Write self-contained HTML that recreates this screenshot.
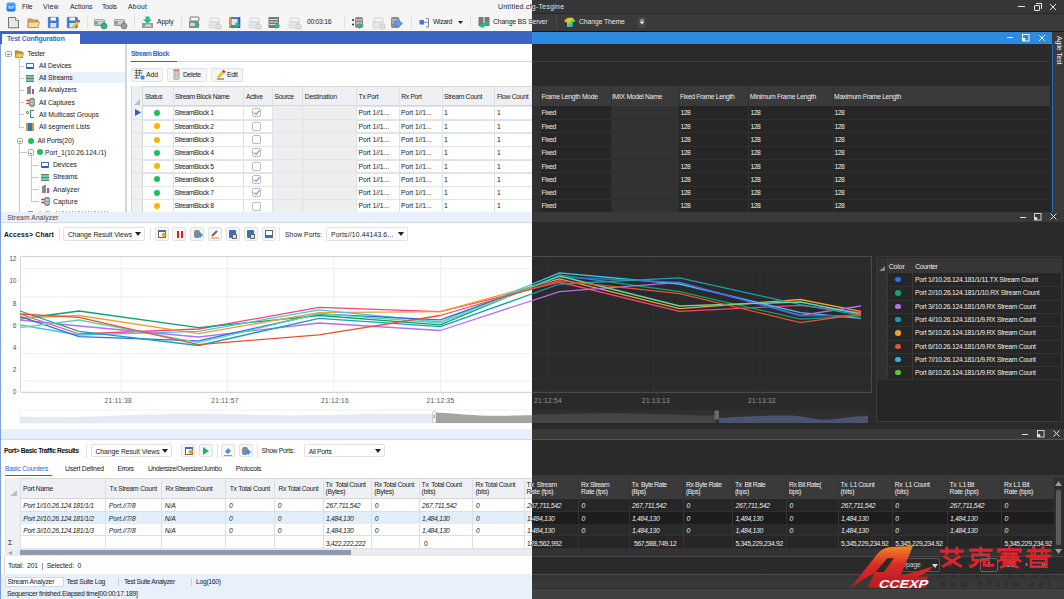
<!DOCTYPE html><html><head><meta charset="utf-8"><style>*{margin:0;padding:0;box-sizing:border-box}
html,body{width:1064px;height:599px;overflow:hidden;background:#fff}
body{position:relative;font-family:"Liberation Sans",sans-serif}
.L{position:absolute;left:0;top:0;width:1064px;height:599px;overflow:hidden}
.L div{position:absolute}
.t{white-space:pre;line-height:10px}
</style></head><body><div class="L" style="clip-path:inset(0 532px 0 0)"><div style="left:0px;top:0px;width:1064px;height:13px;background:#f4f4f4"></div><div style="left:0px;top:13px;width:1064px;height:18px;background:#f5f5f5"></div><div style="left:0px;top:30.8px;width:1064px;height:1.3px;background:#6a6660"></div><div style="left:0px;top:32px;width:1052px;height:12px;background:#3a63c6"></div><svg style="position:absolute;left:6px;top:2px" width="10" height="10"><defs><linearGradient id="lg" x1="0" y1="0" x2="0" y2="1"><stop offset="0" stop-color="#4aa8ff"/><stop offset="1" stop-color="#1a6ef0"/></linearGradient></defs><rect x="0.5" y="0.5" width="9" height="9" rx="2" fill="url(#lg)"/><text x="5" y="6.6" font-family="Liberation Sans" font-weight="bold" font-size="3.6" fill="#fff" text-anchor="middle">TeT</text></svg><div class="t" style="left:22px;top:1.90px;font-size:6.8px;letter-spacing:-0.119px;color:#222">File</div><div class="t" style="left:43px;top:1.90px;font-size:6.8px;letter-spacing:0.228px;color:#222">View</div><div class="t" style="left:70px;top:1.90px;font-size:6.8px;letter-spacing:0.034px;color:#222">Actions</div><div class="t" style="left:102px;top:1.90px;font-size:6.8px;letter-spacing:-0.218px;color:#222">Tools</div><div class="t" style="left:128px;top:1.90px;font-size:6.8px;letter-spacing:0.308px;color:#222">About</div><div class="t" style="left:498px;top:1.90px;font-size:6.8px;letter-spacing:0.331px;color:#222">Untitled.cfg-Tesgine</div><div style="left:1018px;top:6px;width:7px;height:1px;background:#222"></div><div style="left:1034px;top:5px;width:6px;height:6px;border:1px solid #222;border-radius:1px"></div><div style="left:1036px;top:3px;width:6px;height:6px;border-top:1px solid #222;border-right:1px solid #222"></div><svg style="position:absolute;left:1049px;top:3px" width="8" height="8"><path d="M1 1L7 7M7 1L1 7" stroke="#222" stroke-width="1"/></svg><div style="left:1007px;top:37px;width:6px;height:1px;background:#fff"></div><svg style="position:absolute;left:1021px;top:33px" width="9" height="9"><rect x="1.5" y="1.5" width="6.5" height="6.5" fill="none" stroke="#fff" stroke-width="0.9"/><rect x="1.2" y="5" width="3" height="3" fill="#fff"/></svg><svg style="position:absolute;left:1038px;top:34px" width="8" height="8"><path d="M1 1L7 7M7 1L1 7" stroke="#fff" stroke-width="1"/></svg><div style="left:1052px;top:32px;width:12px;height:180px;background:#f5f5f5"></div><div style="left:1051.3px;top:44px;width:1.7px;height:168px;background:#2a6fb5"></div><div class="t" style="left:1053px;top:36px;font-size:7px;letter-spacing:-0.2px;color:#222222;transform-origin:0 0;transform:translate(11px,0) rotate(90deg)">Agile Test</div><svg style="position:absolute;left:0;top:0" width="660" height="32"><path d="M8.5 17.5H15.5L18.5 20.5V27.8H8.5Z" fill="#e4e6ea" stroke="#666" stroke-width="0.9"/><path d="M15.5 17.5V20.5H18.5" fill="#fff" stroke="#666" stroke-width="0.7"/><path d="M28 19H32L33 20H38V27.5H28Z" fill="#d8a860" stroke="#a07840" stroke-width="0.7"/><path d="M28.5 22H39.5L38 27.5H28Z" fill="#f8dc98" stroke="#a07840" stroke-width="0.6"/><rect x="48.3" y="17.3" width="10" height="10.5" rx="0.8" fill="#3d7ad8" stroke="#2a5aa8" stroke-width="0.6"/><rect x="50.5" y="17.5" width="5.5" height="3" fill="#ffffff"/><rect x="50.3" y="23" width="6" height="4.5" fill="#dfe3ea"/><rect x="67.3" y="17.3" width="10" height="10.5" rx="0.8" fill="#3d7ad8" stroke="#2a5aa8" stroke-width="0.6"/><rect x="69.5" y="17.5" width="5.5" height="3" fill="#ffffff"/><rect x="69.3" y="23" width="6" height="4.5" fill="#dfe3ea"/><path d="M73 27.5L78.5 21" stroke="#f0c020" stroke-width="2.6"/><path d="M77.5 20.2L79.5 22" stroke="#e02828" stroke-width="2"/><rect x="94" y="19" width="11" height="7" rx="1.5" fill="#9a9a9a"/><rect x="95" y="21.5" width="8" height="3" fill="#d0d4dc"/><rect x="95.2" y="21.8" width="2.5" height="2" fill="#4a90e2"/><rect x="95" y="19.8" width="9" height="1" fill="#e8e8e8"/><circle cx="104" cy="26" r="3" fill="#1cc07a" stroke="#666" stroke-width="0.6"/><rect x="114" y="19" width="11" height="7" rx="1.5" fill="#9a9a9a"/><rect x="115" y="21.5" width="8" height="3" fill="#d0d4dc"/><rect x="115.2" y="21.8" width="2.5" height="2" fill="#4a90e2"/><rect x="115" y="19.8" width="9" height="1" fill="#e8e8e8"/><circle cx="124" cy="26" r="3" fill="#9a9a9a" stroke="#666" stroke-width="0.6"/><path d="M142 23H153V28H142Z" fill="#9a9a9a"/><rect x="143" y="24.5" width="8" height="2" fill="#d8dce4"/><rect x="143" y="24.5" width="2.5" height="1.5" fill="#4a90e2"/><path d="M145.5 16.5H149.5V19.5H152L147.5 23.5L143 19.5H145.5Z" fill="#1cc07a"/><rect x="190" y="17" width="9" height="4" rx="1" fill="none" stroke="#777" stroke-width="1"/><rect x="189" y="21" width="10" height="7" rx="1" fill="#8a8a8a"/><rect x="190" y="23" width="5" height="3" fill="#cfd6e0"/><path d="M195 22L200 25L195 28Z" fill="#1cc07a"/><rect x="210" y="18" width="9" height="4" rx="1" fill="none" stroke="#d0d0d0" stroke-width="1"/><rect x="209" y="22" width="10" height="6" rx="1" fill="#e6e6e6" stroke="#d0d0d0" stroke-width="0.8"/><rect x="216" y="24" width="5" height="5" rx="1" fill="#e0e0e0" stroke="#c8c8c8" stroke-width="0.8"/><rect x="229" y="17" width="11" height="11" fill="#4a7ad0"/><rect x="229" y="17" width="2" height="11" fill="#c8a028"/><rect x="238.5" y="17" width="1.8" height="11" fill="#3060b0"/><rect x="231.5" y="19" width="6" height="6" fill="#dfe8f8"/><path d="M235.5 22L240.5 25L235.5 28Z" fill="#1cc07a"/><rect x="250" y="18" width="9" height="4" rx="1" fill="none" stroke="#d0d0d0" stroke-width="1"/><rect x="249" y="22" width="10" height="6" rx="1" fill="#e6e6e6" stroke="#d0d0d0" stroke-width="0.8"/><rect x="256" y="24" width="5" height="5" rx="1" fill="#e0e0e0" stroke="#c8c8c8" stroke-width="0.8"/><rect x="268.5" y="17" width="10.5" height="11" fill="#7a7a7a"/><path d="M269.5 19.5H278M269.5 22H278M269.5 24.5H278" stroke="#e8e8e8" stroke-width="0.9"/><path d="M275.5 23L280.5 26L275.5 29Z" fill="#1cc07a"/><rect x="290" y="18" width="9" height="4" rx="1" fill="none" stroke="#d0d0d0" stroke-width="1"/><rect x="289" y="22" width="10" height="6" rx="1" fill="#e6e6e6" stroke="#d0d0d0" stroke-width="0.8"/><rect x="296" y="24" width="5" height="5" rx="1" fill="#e0e0e0" stroke="#c8c8c8" stroke-width="0.8"/><circle cx="353" cy="20" r="1" fill="#222"/><circle cx="353" cy="24.5" r="1" fill="#222"/><rect x="355" y="17" width="8" height="11" rx="2" fill="#8a8a8a"/><path d="M356 20H362M356 23H362" stroke="#eee" stroke-width="0.9"/><path d="M359 23L364 26L359 29Z" fill="#1cc07a"/><rect x="374" y="18" width="9" height="4" rx="1" fill="none" stroke="#d0d0d0" stroke-width="1"/><rect x="373" y="22" width="10" height="6" rx="1" fill="#e6e6e6" stroke="#d0d0d0" stroke-width="0.8"/><rect x="380" y="24" width="5" height="5" rx="1" fill="#e0e0e0" stroke="#c8c8c8" stroke-width="0.8"/><rect x="391" y="17" width="8.5" height="11" rx="2" fill="#8a8a8a"/><path d="M392 20H398.5M392 23H398.5" stroke="#eee" stroke-width="0.9"/><path d="M398 19.5L402.5 23.5L398 27.5L393.5 23.5Z" fill="#5a9af0" stroke="#3a70c8" stroke-width="0.6"/><rect x="419.5" y="20" width="4.5" height="4.5" rx="0.6" fill="#3a7ae8"/><path d="M424 22.3H426M426 18.5H428.5V27H426M426 22.3H428.5" fill="none" stroke="#888" stroke-width="1"/><path d="M458 21H463L460.5 24Z" fill="#222"/><rect x="478.5" y="17" width="5" height="9" fill="#7a7a7a"/><rect x="484.5" y="17" width="5" height="9" fill="#7a7a7a"/><path d="M479 26L486 21.5L489.5 23L482.5 28Z" fill="#1cc07a"/><defs><linearGradient id="tg" x1="0" y1="0" x2="1" y2="1"><stop offset="0" stop-color="#ff4040"/><stop offset="0.35" stop-color="#ffd020"/><stop offset="0.6" stop-color="#30e060"/><stop offset="0.8" stop-color="#20a0ff"/><stop offset="1" stop-color="#c040ff"/></linearGradient></defs><path d="M567 18L569 17.5Q569.8 19 570.5 17.5L572.5 18L575.5 20.5L574 22.5L572.8 21.8V27H567V21.8L565.5 22.5L564 20.5Z" fill="url(#tg)"/></svg><div style="left:86.5px;top:15px;width:1px;height:14px;background:#e2e2e2"></div><div style="left:133.5px;top:15px;width:1px;height:14px;background:#e2e2e2"></div><div style="left:181.3px;top:15px;width:1px;height:14px;background:#e2e2e2"></div><div style="left:343.8px;top:15px;width:1px;height:14px;background:#e2e2e2"></div><div style="left:410.6px;top:15px;width:1px;height:14px;background:#e2e2e2"></div><div style="left:470.4px;top:15px;width:1px;height:14px;background:#e2e2e2"></div><div style="left:556.3px;top:15px;width:1px;height:14px;background:#e2e2e2"></div><div class="t" style="left:157px;top:17.40px;font-size:6.8px;letter-spacing:-0.102px;color:#222">Apply</div><div class="t" style="left:307px;top:17.40px;font-size:6.8px;letter-spacing:-0.281px;color:#222">00:03:16</div><div class="t" style="left:433px;top:17.40px;font-size:6.8px;letter-spacing:-0.371px;color:#222">Wizard</div><div class="t" style="left:493px;top:17.40px;font-size:6.8px;letter-spacing:-0.146px;color:#222">Change BS Server</div><div class="t" style="left:579px;top:17.40px;font-size:6.8px;letter-spacing:-0.077px;color:#222">Change Theme</div><div style="left:2px;top:34px;width:78px;height:10px;background:#ffffff"></div><div class="t" style="left:7px;top:33.90px;font-size:6.8px;letter-spacing:-0.125px;color:#3a63c6;font-weight:bold">Test Configuration</div><div style="left:0px;top:44px;width:1052px;height:168px;background:#ffffff"></div><div style="left:5px;top:50.5px;width:6.5px;height:6.5px;border:1px solid #a8a8a8;border-radius:1.5px;background:#f8f8f8"></div><div style="left:7px;top:53.7px;width:2.5px;height:0.8px;background:#777"></div><svg style="position:absolute;left:15px;top:50px" width="9" height="8"><path d="M0.5 0.8H3.5L4.3 1.8H7.5V7.3H0.5Z" fill="#c8963c" stroke="#8a6428" stroke-width="0.6"/><path d="M0.8 3.3H8.6L7.4 7.3H0.5Z" fill="#f4cc50" stroke="#8a6428" stroke-width="0.5"/></svg><div class="t" style="left:27.5px;top:48.90px;font-size:6.8px;letter-spacing:-0.203px;color:#222222">Tester</div><div style="left:18.5px;top:57px;width:1px;height:70px;background:#c8c8c8"></div><div style="left:37px;top:72.4px;width:88px;height:11px;background:#e8f1fc"></div><div style="left:19px;top:65.7px;width:5px;height:1px;background:#c8c8c8"></div><div class="t" style="left:39px;top:61.10px;font-size:6.8px;letter-spacing:-0.113px;color:#222222">All Devices</div><div style="left:19px;top:77.8px;width:5px;height:1px;background:#c8c8c8"></div><div class="t" style="left:39px;top:73.20px;font-size:6.8px;letter-spacing:-0.102px;color:#222222">All Streams</div><div style="left:19px;top:90px;width:5px;height:1px;background:#c8c8c8"></div><div class="t" style="left:39px;top:85.40px;font-size:6.8px;letter-spacing:-0.095px;color:#222222">All Analyzers</div><div style="left:19px;top:102.3px;width:5px;height:1px;background:#c8c8c8"></div><div class="t" style="left:39px;top:97.70px;font-size:6.8px;letter-spacing:-0.099px;color:#222222">All Captures</div><div style="left:19px;top:114.3px;width:5px;height:1px;background:#c8c8c8"></div><div class="t" style="left:39px;top:109.70px;font-size:6.8px;letter-spacing:-0.029px;color:#222222">All Multicast Groups</div><div style="left:19px;top:126.8px;width:5px;height:1px;background:#c8c8c8"></div><div class="t" style="left:39px;top:122.20px;font-size:6.8px;letter-spacing:-0.025px;color:#222222">All segment Lists</div><div style="left:26px;top:62.5px;width:8px;height:6px;background:#fff;border:1px solid #4d6fa8;border-bottom:2.5px solid #2d5fbf;border-radius:1px"></div><div style="left:26px;top:74.5px;width:8px;height:7px;background:repeating-linear-gradient(#777 0 1.5px,#6cd0a0 1.5px 3px)"></div><div style="left:26.5px;top:86.5px;width:2px;height:7px;background:#888"></div><div style="left:29px;top:85.5px;width:2px;height:8px;background:#888"></div><div style="left:31.5px;top:88.5px;width:2.5px;height:5px;background:#a050d0"></div><svg style="position:absolute;left:25.5px;top:98px" width="9" height="9"><path d="M0.3 2.5H3.5M0.3 5.5H3.5" stroke="#e02828" stroke-width="1.3"/><rect x="3.8" y="0.5" width="4.5" height="7.8" rx="1" fill="#a8a8a8" stroke="#555" stroke-width="0.7"/><path d="M4 3H8M4 5.8H8" stroke="#eee" stroke-width="0.6"/></svg><div style="left:26px;top:111px;width:3px;height:3px;border:1px solid #555;border-radius:50%"></div><div style="left:30px;top:110px;width:4px;height:8px;border:1.5px solid #2a9a6a;border-right:none"></div><div style="left:26px;top:123px;width:8px;height:8px;background:#3a70c0;border-left:2px solid #c8a030;border-right:2px solid #c8a030"></div><div style="left:16.5px;top:137.5px;width:6.5px;height:6.5px;border:1px solid #a8a8a8;border-radius:1.5px;background:#f8f8f8"></div><div style="left:18.5px;top:140.7px;width:2.5px;height:0.8px;background:#777"></div><div style="left:28px;top:137.5px;width:6px;height:6px;background:#1fbf5f;border-radius:50%"></div><div class="t" style="left:37.5px;top:135.90px;font-size:6.8px;letter-spacing:-0.076px;color:#222222">All Ports(20)</div><div style="left:19px;top:144px;width:1px;height:68px;background:#c8c8c8"></div><div style="left:19px;top:152.4px;width:8px;height:1px;background:#c8c8c8"></div><div style="left:27.5px;top:149.4px;width:6.5px;height:6.5px;border:1px solid #a8a8a8;border-radius:1.5px;background:#f8f8f8"></div><div style="left:29.5px;top:152.6px;width:2.5px;height:0.8px;background:#777"></div><div style="left:37px;top:149.4px;width:6px;height:6px;background:#1fbf5f;border-radius:50%"></div><div class="t" style="left:45px;top:147.80px;font-size:6.8px;letter-spacing:-0.051px;color:#222222">Port_1(10.26.124./1)</div><div style="left:30.5px;top:156px;width:1px;height:46px;background:#c8c8c8"></div><div style="left:30.5px;top:164.7px;width:8px;height:1px;background:#c8c8c8"></div><div class="t" style="left:53px;top:160.10px;font-size:6.8px;letter-spacing:-0.064px;color:#222222">Devices</div><div style="left:30.5px;top:176.9px;width:8px;height:1px;background:#c8c8c8"></div><div class="t" style="left:53px;top:172.30px;font-size:6.8px;letter-spacing:-0.119px;color:#222222">Streams</div><div style="left:30.5px;top:189.4px;width:8px;height:1px;background:#c8c8c8"></div><div class="t" style="left:53px;top:184.80px;font-size:6.8px;letter-spacing:0.006px;color:#222222">Analyzer</div><div style="left:30.5px;top:201.3px;width:8px;height:1px;background:#c8c8c8"></div><div class="t" style="left:53px;top:196.70px;font-size:6.8px;letter-spacing:0.085px;color:#222222">Capture</div><div style="left:41px;top:161.5px;width:8px;height:6px;background:#fff;border:1px solid #4d6fa8;border-bottom:2.5px solid #2d5fbf;border-radius:1px"></div><div style="left:41px;top:173.5px;width:8px;height:7px;background:repeating-linear-gradient(#777 0 1.5px,#6cd0a0 1.5px 3px)"></div><div style="left:41.5px;top:186px;width:2px;height:7px;background:#888"></div><div style="left:44px;top:185px;width:2px;height:8px;background:#888"></div><div style="left:46.5px;top:188px;width:2.5px;height:5px;background:#a050d0"></div><svg style="position:absolute;left:40.5px;top:197px" width="9" height="9"><path d="M0.3 2.5H3.5M0.3 5.5H3.5" stroke="#e02828" stroke-width="1.3"/><rect x="3.8" y="0.5" width="4.5" height="7.8" rx="1" fill="#a8a8a8" stroke="#555" stroke-width="0.7"/><path d="M4 3H8M4 5.8H8" stroke="#eee" stroke-width="0.6"/></svg><div style="left:28px;top:210.8px;width:5px;height:1.2px;background:#999"></div><div style="left:38.5px;top:210.8px;width:2.5px;height:1.2px;background:#f5c840"></div><div style="left:46px;top:210.8px;width:3px;height:1.2px;background:#aaa"></div><div style="left:56px;top:210.8px;width:52px;height:1.2px;background:repeating-linear-gradient(90deg,#b0b0b0 0 1.2px,transparent 1.2px 3.2px)"></div><div style="left:125px;top:44px;width:1.5px;height:168px;background:#d6d6d6"></div><div class="t" style="left:131px;top:49.10px;font-size:6.8px;letter-spacing:-0.460px;color:#3a63c6;font-weight:bold">Stream Block</div><div style="left:130px;top:61px;width:920px;height:1.2px;background:#d6d6d6"></div><div style="left:131px;top:60.5px;width:46px;height:1.6px;background:#3a63c6"></div><div style="left:131px;top:67.5px;width:32px;height:14px;background:#f6f6f6;border:1px solid #e2e2e2;border-radius:2px"></div><div class="t" style="left:146px;top:70.00px;font-size:6.8px;letter-spacing:-0.049px;color:#222222">Add</div><div style="left:167.3px;top:67.5px;width:40.2px;height:14px;background:#f6f6f6;border:1px solid #e2e2e2;border-radius:2px"></div><div class="t" style="left:183px;top:70.00px;font-size:6.8px;letter-spacing:-0.331px;color:#222222">Delete</div><div style="left:211.3px;top:67.5px;width:32.2px;height:14px;background:#f6f6f6;border:1px solid #e2e2e2;border-radius:2px"></div><div class="t" style="left:227px;top:70.00px;font-size:6.8px;letter-spacing:-0.239px;color:#222222">Edit</div><svg style="position:absolute;left:134px;top:69px" width="11" height="11"><path d="M0.5 1.5H8.5M0.5 4H8.5M0.5 6.5H6M0.5 9H5" stroke="#666" stroke-width="1.2"/><path d="M2.5 0.5V9.5M5.5 0.5V7" stroke="#666" stroke-width="0.8"/><rect x="6.5" y="6.5" width="4" height="4" rx="0.8" fill="#3a8ef0"/></svg><svg style="position:absolute;left:173px;top:69px" width="8" height="11"><rect x="0.5" y="0.3" width="6" height="1.8" fill="#f07858"/><rect x="1" y="2" width="5" height="8.3" rx="1" fill="#e8e8e8" stroke="#8a8a8a" stroke-width="0.8"/><path d="M2.8 3.5V8.8M4.3 3.5V8.8" stroke="#8a8a8a" stroke-width="0.6"/></svg><svg style="position:absolute;left:216px;top:69px" width="10" height="11"><path d="M2 8.5L7.5 2.5" stroke="#f0c020" stroke-width="2.6"/><path d="M6.8 1.5L8.8 3.5" stroke="#e02828" stroke-width="2"/><path d="M1 10H8" stroke="#444" stroke-width="0.9"/></svg><div style="left:130.5px;top:85.6px;width:429.5px;height:20.700000000000003px;background:#eef0f3;border-top:1px solid #d6d6d6"></div><div style="left:130.5px;top:106.3px;width:429.5px;height:105.7px;background:#ffffff"></div><div style="left:130.5px;top:106.3px;width:429.5px;height:1px;background:#dfe2e6"></div><div style="left:130.5px;top:119.6px;width:429.5px;height:1px;background:#dfe2e6"></div><div style="left:130.5px;top:132.9px;width:429.5px;height:1px;background:#dfe2e6"></div><div style="left:130.5px;top:146.2px;width:429.5px;height:1px;background:#dfe2e6"></div><div style="left:130.5px;top:159.5px;width:429.5px;height:1px;background:#dfe2e6"></div><div style="left:130.5px;top:172.8px;width:429.5px;height:1px;background:#dfe2e6"></div><div style="left:130.5px;top:186.10000000000002px;width:429.5px;height:1px;background:#dfe2e6"></div><div style="left:130.5px;top:199.4px;width:429.5px;height:1px;background:#dfe2e6"></div><div style="left:130.5px;top:105.3px;width:429.5px;height:1px;background:#d6d6d6"></div><div style="left:130.5px;top:85.6px;width:1px;height:126.4px;background:#dfe2e6"></div><div style="left:142.4px;top:85.6px;width:1px;height:126.4px;background:#dfe2e6"></div><div style="left:172.6px;top:85.6px;width:1px;height:126.4px;background:#dfe2e6"></div><div style="left:243.4px;top:85.6px;width:1px;height:126.4px;background:#dfe2e6"></div><div style="left:272px;top:85.6px;width:1px;height:126.4px;background:#dfe2e6"></div><div style="left:302.3px;top:85.6px;width:1px;height:126.4px;background:#dfe2e6"></div><div style="left:356.1px;top:85.6px;width:1px;height:126.4px;background:#dfe2e6"></div><div style="left:398.7px;top:85.6px;width:1px;height:126.4px;background:#dfe2e6"></div><div style="left:441.5px;top:85.6px;width:1px;height:126.4px;background:#dfe2e6"></div><div style="left:494.4px;top:85.6px;width:1px;height:126.4px;background:#dfe2e6"></div><div style="left:130.5px;top:85.6px;width:12px;height:126.4px;background:#eef0f3"></div><div style="left:142.4px;top:85.6px;width:1px;height:126.4px;background:#d6d6d6"></div><div style="left:130.5px;top:85.6px;width:1px;height:126.4px;background:#d6d6d6"></div><svg style="position:absolute;left:133px;top:99px" width="8" height="6"><path d="M7 0V6H1Z" fill="#b6bdc8"/></svg><svg style="position:absolute;left:135px;top:109px" width="6" height="7"><path d="M0 0L6 3.5L0 7Z" fill="#2a5bd0"/></svg><div style="left:272.5px;top:106.3px;width:83.5px;height:105.7px;background:#eeeeee"></div><div style="left:302.3px;top:106.3px;width:1px;height:105.7px;background:#e0e0e0"></div><div style="left:154px;top:109.89999999999999px;width:6px;height:6px;background:#1fbf5f;border-radius:50%"></div><div class="t" style="left:174.5px;top:108.30px;font-size:6.8px;letter-spacing:-0.393px;color:#222222">StreamBlock 1</div><div style="left:251.5px;top:108.39999999999999px;width:9px;height:9px;border:1px solid #bcbcbc;border-radius:2px;background:#fff"></div><svg style="position:absolute;left:252.5px;top:109.39999999999999px" width="7" height="7"><path d="M1 3.5L3 5.5L6.5 1.5" stroke="#2a5bd0" stroke-width="1" fill="none"/></svg><div class="t" style="left:358.5px;top:108.30px;font-size:6.8px;letter-spacing:-0.070px;color:#222222">Port 1//1...</div><div class="t" style="left:401px;top:108.30px;font-size:6.8px;letter-spacing:-0.070px;color:#222222">Port 1//1...</div><div class="t" style="left:444px;top:108.30px;font-size:6.8px;letter-spacing:-0.334px;color:#222222">1</div><div class="t" style="left:497px;top:108.30px;font-size:6.8px;letter-spacing:-0.334px;color:#222222">1</div><div style="left:154px;top:123.19999999999999px;width:6px;height:6px;background:#f5b800;border-radius:50%"></div><div class="t" style="left:174.5px;top:121.60px;font-size:6.8px;letter-spacing:-0.393px;color:#222222">StreamBlock 2</div><div style="left:251.5px;top:121.69999999999999px;width:9px;height:9px;border:1px solid #bcbcbc;border-radius:2px;background:#fff"></div><div class="t" style="left:358.5px;top:121.60px;font-size:6.8px;letter-spacing:-0.070px;color:#222222">Port 1//1...</div><div class="t" style="left:401px;top:121.60px;font-size:6.8px;letter-spacing:-0.070px;color:#222222">Port 1//1...</div><div class="t" style="left:444px;top:121.60px;font-size:6.8px;letter-spacing:-0.334px;color:#222222">1</div><div class="t" style="left:497px;top:121.60px;font-size:6.8px;letter-spacing:-0.334px;color:#222222">1</div><div style="left:154px;top:136.5px;width:6px;height:6px;background:#f5b800;border-radius:50%"></div><div class="t" style="left:174.5px;top:134.90px;font-size:6.8px;letter-spacing:-0.393px;color:#222222">StreamBlock 3</div><div style="left:251.5px;top:135.0px;width:9px;height:9px;border:1px solid #bcbcbc;border-radius:2px;background:#fff"></div><div class="t" style="left:358.5px;top:134.90px;font-size:6.8px;letter-spacing:-0.070px;color:#222222">Port 1//1...</div><div class="t" style="left:401px;top:134.90px;font-size:6.8px;letter-spacing:-0.070px;color:#222222">Port 1//1...</div><div class="t" style="left:444px;top:134.90px;font-size:6.8px;letter-spacing:-0.334px;color:#222222">1</div><div class="t" style="left:497px;top:134.90px;font-size:6.8px;letter-spacing:-0.334px;color:#222222">1</div><div style="left:154px;top:149.79999999999998px;width:6px;height:6px;background:#1fbf5f;border-radius:50%"></div><div class="t" style="left:174.5px;top:148.20px;font-size:6.8px;letter-spacing:-0.393px;color:#222222">StreamBlock 4</div><div style="left:251.5px;top:148.29999999999998px;width:9px;height:9px;border:1px solid #bcbcbc;border-radius:2px;background:#fff"></div><svg style="position:absolute;left:252.5px;top:149.29999999999998px" width="7" height="7"><path d="M1 3.5L3 5.5L6.5 1.5" stroke="#2a5bd0" stroke-width="1" fill="none"/></svg><div class="t" style="left:358.5px;top:148.20px;font-size:6.8px;letter-spacing:-0.070px;color:#222222">Port 1//1...</div><div class="t" style="left:401px;top:148.20px;font-size:6.8px;letter-spacing:-0.070px;color:#222222">Port 1//1...</div><div class="t" style="left:444px;top:148.20px;font-size:6.8px;letter-spacing:-0.334px;color:#222222">1</div><div class="t" style="left:497px;top:148.20px;font-size:6.8px;letter-spacing:-0.334px;color:#222222">1</div><div style="left:154px;top:163.1px;width:6px;height:6px;background:#f5b800;border-radius:50%"></div><div class="t" style="left:174.5px;top:161.50px;font-size:6.8px;letter-spacing:-0.393px;color:#222222">StreamBlock 5</div><div style="left:251.5px;top:161.6px;width:9px;height:9px;border:1px solid #bcbcbc;border-radius:2px;background:#fff"></div><div class="t" style="left:358.5px;top:161.50px;font-size:6.8px;letter-spacing:-0.070px;color:#222222">Port 1//1...</div><div class="t" style="left:401px;top:161.50px;font-size:6.8px;letter-spacing:-0.070px;color:#222222">Port 1//1...</div><div class="t" style="left:444px;top:161.50px;font-size:6.8px;letter-spacing:-0.334px;color:#222222">1</div><div class="t" style="left:497px;top:161.50px;font-size:6.8px;letter-spacing:-0.334px;color:#222222">1</div><div style="left:154px;top:176.4px;width:6px;height:6px;background:#1fbf5f;border-radius:50%"></div><div class="t" style="left:174.5px;top:174.80px;font-size:6.8px;letter-spacing:-0.393px;color:#222222">StreamBlock 6</div><div style="left:251.5px;top:174.9px;width:9px;height:9px;border:1px solid #bcbcbc;border-radius:2px;background:#fff"></div><svg style="position:absolute;left:252.5px;top:175.9px" width="7" height="7"><path d="M1 3.5L3 5.5L6.5 1.5" stroke="#2a5bd0" stroke-width="1" fill="none"/></svg><div class="t" style="left:358.5px;top:174.80px;font-size:6.8px;letter-spacing:-0.070px;color:#222222">Port 1//1...</div><div class="t" style="left:401px;top:174.80px;font-size:6.8px;letter-spacing:-0.070px;color:#222222">Port 1//1...</div><div class="t" style="left:444px;top:174.80px;font-size:6.8px;letter-spacing:-0.334px;color:#222222">1</div><div class="t" style="left:497px;top:174.80px;font-size:6.8px;letter-spacing:-0.334px;color:#222222">1</div><div style="left:154px;top:189.70000000000002px;width:6px;height:6px;background:#1fbf5f;border-radius:50%"></div><div class="t" style="left:174.5px;top:188.10px;font-size:6.8px;letter-spacing:-0.393px;color:#222222">StreamBlock 7</div><div style="left:251.5px;top:188.20000000000002px;width:9px;height:9px;border:1px solid #bcbcbc;border-radius:2px;background:#fff"></div><svg style="position:absolute;left:252.5px;top:189.20000000000002px" width="7" height="7"><path d="M1 3.5L3 5.5L6.5 1.5" stroke="#2a5bd0" stroke-width="1" fill="none"/></svg><div class="t" style="left:358.5px;top:188.10px;font-size:6.8px;letter-spacing:-0.070px;color:#222222">Port 1//1...</div><div class="t" style="left:401px;top:188.10px;font-size:6.8px;letter-spacing:-0.070px;color:#222222">Port 1//1...</div><div class="t" style="left:444px;top:188.10px;font-size:6.8px;letter-spacing:-0.334px;color:#222222">1</div><div class="t" style="left:497px;top:188.10px;font-size:6.8px;letter-spacing:-0.334px;color:#222222">1</div><div style="left:154px;top:203.0px;width:6px;height:6px;background:#f5b800;border-radius:50%"></div><div class="t" style="left:174.5px;top:201.40px;font-size:6.8px;letter-spacing:-0.393px;color:#222222">StreamBlock 8</div><div style="left:251.5px;top:201.5px;width:9px;height:9px;border:1px solid #bcbcbc;border-radius:2px;background:#fff"></div><div class="t" style="left:358.5px;top:201.40px;font-size:6.8px;letter-spacing:-0.070px;color:#222222">Port 1//1...</div><div class="t" style="left:401px;top:201.40px;font-size:6.8px;letter-spacing:-0.070px;color:#222222">Port 1//1...</div><div class="t" style="left:444px;top:201.40px;font-size:6.8px;letter-spacing:-0.334px;color:#222222">1</div><div class="t" style="left:497px;top:201.40px;font-size:6.8px;letter-spacing:-0.334px;color:#222222">1</div><div class="t" style="left:144.9px;top:91.70px;font-size:6.8px;letter-spacing:-0.315px;color:#222222">Status</div><div class="t" style="left:175.1px;top:91.70px;font-size:6.8px;letter-spacing:-0.360px;color:#222222">Stream Block Name</div><div class="t" style="left:245.9px;top:91.70px;font-size:6.8px;letter-spacing:-0.283px;color:#222222">Active</div><div class="t" style="left:274.5px;top:91.70px;font-size:6.8px;letter-spacing:-0.389px;color:#222222">Source</div><div class="t" style="left:304.8px;top:91.70px;font-size:6.8px;letter-spacing:-0.182px;color:#222222">Destination</div><div class="t" style="left:358.6px;top:91.70px;font-size:6.8px;letter-spacing:-0.322px;color:#222222">Tx Port</div><div class="t" style="left:401.2px;top:91.70px;font-size:6.8px;letter-spacing:-0.328px;color:#222222">Rx Port</div><div class="t" style="left:444.0px;top:91.70px;font-size:6.8px;letter-spacing:-0.314px;color:#222222">Stream Count</div><div class="t" style="left:496.9px;top:91.70px;font-size:6.8px;letter-spacing:-0.299px;color:#222222">Flow Count</div><div style="left:130.5px;top:119.1px;width:429.5px;height:0.8px;background:#e2e4e8"></div><div style="left:130.5px;top:132.4px;width:429.5px;height:0.8px;background:#e2e4e8"></div><div style="left:130.5px;top:145.7px;width:429.5px;height:0.8px;background:#e2e4e8"></div><div style="left:130.5px;top:159.0px;width:429.5px;height:0.8px;background:#e2e4e8"></div><div style="left:130.5px;top:172.3px;width:429.5px;height:0.8px;background:#e2e4e8"></div><div style="left:130.5px;top:185.60000000000002px;width:429.5px;height:0.8px;background:#e2e4e8"></div><div style="left:130.5px;top:198.9px;width:429.5px;height:0.8px;background:#e2e4e8"></div><div style="left:0px;top:212px;width:1064px;height:10px;background:#e8f1fb"></div><div style="left:0px;top:221.5px;width:1064px;height:1px;background:#d4dbe6"></div><div class="t" style="left:7.2px;top:213.20px;font-size:6.8px;letter-spacing:0.094px;color:#444">Stream Analyzer</div><div style="left:0px;top:222.5px;width:1064px;height:203px;background:#ffffff"></div><div class="t" style="left:4px;top:229.90px;font-size:6.8px;letter-spacing:0.205px;color:#111;font-weight:bold">Access&gt; Chart</div><div style="left:59px;top:227px;width:1px;height:14px;background:#e2e2e2"></div><div style="left:63px;top:227px;width:82px;height:13.5px;background:#ffffff;border:1px solid #e2e2e2;border-radius:2px"></div><div class="t" style="left:68px;top:229.55px;font-size:6.8px;letter-spacing:-0.044px;color:#222222">Change Result Views</div><svg style="position:absolute;left:135px;top:231.75px" width="6" height="4"><path d="M0 0H6L3 4Z" fill="#222222"/></svg><div style="left:150px;top:227px;width:1px;height:14px;background:#e2e2e2"></div><div style="left:154.5px;top:227px;width:14px;height:13.5px;background:#f6f6f6;border:1px solid #e2e2e2;border-radius:2px"></div><div style="left:172.2px;top:227px;width:14px;height:13.5px;background:#f6f6f6;border:1px solid #e2e2e2;border-radius:2px"></div><div style="left:190px;top:227px;width:14px;height:13.5px;background:#f6f6f6;border:1px solid #e2e2e2;border-radius:2px"></div><div style="left:208px;top:227px;width:14px;height:13.5px;background:#f6f6f6;border:1px solid #e2e2e2;border-radius:2px"></div><div style="left:226px;top:227px;width:14px;height:13.5px;background:#f6f6f6;border:1px solid #e2e2e2;border-radius:2px"></div><div style="left:243.5px;top:227px;width:14px;height:13.5px;background:#f6f6f6;border:1px solid #e2e2e2;border-radius:2px"></div><div style="left:261.5px;top:227px;width:14px;height:13.5px;background:#f6f6f6;border:1px solid #e2e2e2;border-radius:2px"></div><div style="left:158px;top:230px;width:8px;height:7.5px;border:1px solid #666;border-top:2px solid #3a70c0;background:#fff"></div><div style="left:162px;top:233px;width:4px;height:4px;background:#e8a020;transform:rotate(45deg)"></div><div style="left:176.5px;top:230.5px;width:2px;height:7px;background:#d62020"></div><div style="left:180.5px;top:230.5px;width:2px;height:7px;background:#d62020"></div><div style="left:193.5px;top:230px;width:6px;height:8px;background:#8a8a8a;border-radius:2px"></div><svg style="position:absolute;left:197px;top:232px" width="6" height="6"><path d="M0 1H3V0L6 3L3 6V5H0Z" fill="#4a90e2"/></svg><svg style="position:absolute;left:210px;top:229px" width="10" height="10"><path d="M2 7L7 2" stroke="#666" stroke-width="2"/><path d="M1 9H9" stroke="#f08030" stroke-width="1"/></svg><div style="left:229px;top:230px;width:7px;height:8px;background:#3a70c0;border-radius:1px"></div><div style="left:232px;top:234px;width:5px;height:5px;background:#ddd;border:1px solid #666"></div><div style="left:246.5px;top:230px;width:7px;height:8px;background:#3a70c0;border-radius:1px"></div><div style="left:249.5px;top:234px;width:5px;height:5px;background:#ddd;border:1px solid #666"></div><div style="left:264.5px;top:230px;width:8px;height:8px;border:1px solid #666;background:#fff"></div><div style="left:266px;top:235px;width:6px;height:2px;background:#3a70c0"></div><div style="left:279px;top:227px;width:1px;height:14px;background:#e2e2e2"></div><div class="t" style="left:285px;top:229.80px;font-size:6.8px;letter-spacing:0.034px;color:#222222">Show Ports:</div><div style="left:326px;top:227px;width:82px;height:13.5px;background:#ffffff;border:1px solid #e2e2e2;border-radius:2px"></div><div class="t" style="left:331px;top:229.55px;font-size:6.8px;letter-spacing:0.155px;color:#222222">Ports//10.44143.6...</div><svg style="position:absolute;left:398px;top:231.75px" width="6" height="4"><path d="M0 0H6L3 4Z" fill="#222222"/></svg><svg style="position:absolute;left:0;top:0" width="1064" height="599"><line x1="21" y1="268.5" x2="1050" y2="268.5" stroke="#efefef" stroke-width="1"/><line x1="21" y1="296.8" x2="1050" y2="296.8" stroke="#efefef" stroke-width="1"/><line x1="21" y1="325" x2="1050" y2="325" stroke="#efefef" stroke-width="1"/><line x1="21" y1="353.5" x2="1050" y2="353.5" stroke="#efefef" stroke-width="1"/><line x1="21" y1="381" x2="1050" y2="381" stroke="#efefef" stroke-width="1"/><line x1="121" y1="257" x2="121" y2="392" stroke="#efefef" stroke-width="1"/><line x1="124" y1="392" x2="124" y2="394" stroke="#d4d4d4" stroke-width="1"/><line x1="227.5" y1="257" x2="227.5" y2="392" stroke="#efefef" stroke-width="1"/><line x1="230.5" y1="392" x2="230.5" y2="394" stroke="#d4d4d4" stroke-width="1"/><line x1="334" y1="257" x2="334" y2="392" stroke="#efefef" stroke-width="1"/><line x1="337" y1="392" x2="337" y2="394" stroke="#d4d4d4" stroke-width="1"/><line x1="440.5" y1="257" x2="440.5" y2="392" stroke="#efefef" stroke-width="1"/><line x1="443.5" y1="392" x2="443.5" y2="394" stroke="#d4d4d4" stroke-width="1"/><line x1="547" y1="257" x2="547" y2="392" stroke="#efefef" stroke-width="1"/><line x1="550" y1="392" x2="550" y2="394" stroke="#d4d4d4" stroke-width="1"/><line x1="653.5" y1="257" x2="653.5" y2="392" stroke="#efefef" stroke-width="1"/><line x1="656.5" y1="392" x2="656.5" y2="394" stroke="#d4d4d4" stroke-width="1"/><line x1="760" y1="257" x2="760" y2="392" stroke="#efefef" stroke-width="1"/><line x1="763" y1="392" x2="763" y2="394" stroke="#d4d4d4" stroke-width="1"/><path d="M20.5 392V256.5H1050" fill="none" stroke="#d4d4d4" stroke-width="1"/><line x1="20.5" y1="392.3" x2="1050" y2="392.3" stroke="#d4d4d4" stroke-width="1.2"/><polyline points="20,314 79,334 198.5,329 319,307.4 440.3,311.7 559.5,282 679.5,311.3 800.5,305.3 861,312.6" fill="none" stroke="#f0457a" stroke-width="1.3" stroke-linejoin="round"/><polyline points="20,319 79,311 198.5,327.7 319,315.5 440.3,324.8 559.5,275 679.5,291.6 800.5,319.2 861,315.8" fill="none" stroke="#14a06e" stroke-width="1.3" stroke-linejoin="round"/><polyline points="20,318 79,315.5 198.5,333.7 319,312.6 440.3,311.7 559.5,278.8 679.5,308.7 800.5,299.5 861,311.3" fill="none" stroke="#f0a030" stroke-width="1.3" stroke-linejoin="round"/><polyline points="20,325 79,335 198.5,331.4 319,309.8 440.3,322 559.5,272.8 679.5,284 800.5,312.6 861,318.4" fill="none" stroke="#46c6e6" stroke-width="1.3" stroke-linejoin="round"/><polyline points="20,320 79,326 198.5,337 319,323 440.3,330.5 559.5,291.6 679.5,282.4 800.5,315.3 861,306" fill="none" stroke="#b86ef2" stroke-width="1.3" stroke-linejoin="round"/><polyline points="20,316.4 79,336.7 198.5,340.8 319,314 440.3,319.8 559.5,277 679.5,282.4 800.5,315.8 861,315.3" fill="none" stroke="#2f6cf0" stroke-width="1.3" stroke-linejoin="round"/><polyline points="20,311 79,331.4 198.5,345.5 319,318.3 440.3,326.7 559.5,284 679.5,277.9 800.5,304.7 861,315.3" fill="none" stroke="#18a0b0" stroke-width="1.3" stroke-linejoin="round"/><polyline points="20,327.7 79,320 198.5,342.7 319,313.6 440.3,323 559.5,276 679.5,306 800.5,302 861,314" fill="none" stroke="#5ed6a6" stroke-width="1.3" stroke-linejoin="round"/><polyline points="20,314 79,317.3 198.5,344.6 319,334.8 440.3,315.5 559.5,280.7 679.5,293.7 800.5,322.6 861,314" fill="none" stroke="#e5532c" stroke-width="1.3" stroke-linejoin="round"/><rect x="20" y="410" width="1030" height="13" fill="#fff" stroke="#ececec" stroke-width="0.8"/><path d="M20 416.5 C50 418 80 417 120 415.5 S200 413.5 260 415 S360 413 434 414 V423 H20Z" fill="#e4e9f4"/><path d="M436 412.5 C450 413 460 414.5 480 415.5 S520 415 560 415 V423 H436Z" fill="#a3a3a3"/><rect x="432.5" y="411.5" width="3.5" height="11" rx="1" fill="#fff" stroke="#aaa" stroke-width="0.6"/><line x1="434.2" y1="414.5" x2="434.2" y2="418.5" stroke="#555" stroke-width="0.7"/></svg><div class="t" style="left:0;width:16.5px;text-align:right;top:254.3px;font-size:6.6px;color:#555">12</div><div class="t" style="left:0;width:16.5px;text-align:right;top:276.4px;font-size:6.6px;color:#555">10</div><div class="t" style="left:0;width:16.5px;text-align:right;top:298.6px;font-size:6.6px;color:#555">8</div><div class="t" style="left:0;width:16.5px;text-align:right;top:320.5px;font-size:6.6px;color:#555">6</div><div class="t" style="left:0;width:16.5px;text-align:right;top:342.5px;font-size:6.6px;color:#555">4</div><div class="t" style="left:0;width:16.5px;text-align:right;top:365px;font-size:6.6px;color:#555">2</div><div class="t" style="left:0;width:16.5px;text-align:right;top:387.4px;font-size:6.6px;color:#555">0</div><div class="t" style="left:98.3px;width:40px;text-align:center;top:395.6px;font-size:6.6px;color:#555;letter-spacing:0.3px">21:11:38</div><div class="t" style="left:205px;width:40px;text-align:center;top:395.6px;font-size:6.6px;color:#555;letter-spacing:0.3px">21:11:57</div><div class="t" style="left:315px;width:40px;text-align:center;top:395.6px;font-size:6.6px;color:#555;letter-spacing:0.3px">21:12:16</div><div class="t" style="left:420.5px;width:40px;text-align:center;top:395.6px;font-size:6.6px;color:#555;letter-spacing:0.3px">21:12:35</div><div class="t" style="left:528px;width:40px;text-align:center;top:395.6px;font-size:6.6px;color:#555;letter-spacing:0.3px">21:12:54</div><div class="t" style="left:636px;width:40px;text-align:center;top:395.6px;font-size:6.6px;color:#555;letter-spacing:0.3px">21:13:13</div><div class="t" style="left:742px;width:40px;text-align:center;top:395.6px;font-size:6.6px;color:#555;letter-spacing:0.3px">21:13:32</div><div style="left:0px;top:425px;width:1064px;height:3.5px;background:#ffffff"></div><div style="left:0px;top:428.5px;width:1064px;height:11px;background:#e8f1fb"></div><div style="left:0px;top:439.3px;width:1064px;height:1px;background:#d4dbe6"></div><div style="left:0px;top:440.3px;width:1064px;height:159px;background:#ffffff"></div><div class="t" style="left:4px;top:445.90px;font-size:6.8px;letter-spacing:-0.437px;color:#111;font-weight:bold">Port&gt; Basic Traffic Results</div><div style="left:86px;top:444px;width:1px;height:14px;background:#e2e2e2"></div><div style="left:90.5px;top:444.2px;width:81.6px;height:13.2px;background:#ffffff;border:1px solid #e2e2e2;border-radius:2px"></div><div class="t" style="left:95.5px;top:446.60px;font-size:6.8px;letter-spacing:-0.044px;color:#222222">Change Result Views</div><svg style="position:absolute;left:162.1px;top:448.8px" width="6" height="4"><path d="M0 0H6L3 4Z" fill="#222222"/></svg><div style="left:181.3px;top:444.2px;width:13.5px;height:13.2px;background:#f6f6f6;border:1px solid #e2e2e2;border-radius:2px"></div><div style="left:199px;top:444.2px;width:13.5px;height:13.2px;background:#f6f6f6;border:1px solid #e2e2e2;border-radius:2px"></div><div style="left:221.3px;top:444.2px;width:13.5px;height:13.2px;background:#f6f6f6;border:1px solid #e2e2e2;border-radius:2px"></div><div style="left:239px;top:444.2px;width:13.5px;height:13.2px;background:#f6f6f6;border:1px solid #e2e2e2;border-radius:2px"></div><div style="left:216.8px;top:444px;width:1px;height:14px;background:#e2e2e2"></div><div style="left:257px;top:444px;width:1px;height:14px;background:#e2e2e2"></div><div style="left:184.5px;top:447px;width:8px;height:7.5px;border:1px solid #666;border-top:2px solid #3a70c0;background:#fff"></div><div style="left:188.5px;top:450px;width:4px;height:4px;background:#e8a020;transform:rotate(45deg)"></div><svg style="position:absolute;left:203px;top:447px" width="6" height="8"><path d="M0 0L6 4L0 8Z" fill="#20b070"/></svg><svg style="position:absolute;left:223px;top:446px" width="10" height="10"><path d="M2 6L5 2L8 5L5 8Z" fill="#4a90e2"/><path d="M1 9.5H9" stroke="#4a90e2" stroke-width="0.8"/></svg><div style="left:242px;top:447px;width:6px;height:8px;background:#8a8a8a;border-radius:2px"></div><svg style="position:absolute;left:245px;top:449px" width="6" height="6"><path d="M0 1H3V0L6 3L3 6V5H0Z" fill="#4a90e2"/></svg><div class="t" style="left:261.5px;top:445.90px;font-size:6.8px;letter-spacing:-0.336px;color:#222222">Show Ports:</div><div style="left:303.8px;top:444.4px;width:81.5px;height:13px;background:#ffffff;border:1px solid #e2e2e2;border-radius:2px"></div><div class="t" style="left:308.8px;top:446.70px;font-size:6.8px;letter-spacing:-0.290px;color:#222222">All Ports</div><svg style="position:absolute;left:375.3px;top:448.9px" width="6" height="4"><path d="M0 0H6L3 4Z" fill="#222222"/></svg><div class="t" style="left:5px;top:463.60px;font-size:6.8px;letter-spacing:-0.208px;color:#3a63c6">Basic Counters</div><div class="t" style="left:65px;top:463.60px;font-size:6.8px;letter-spacing:-0.214px;color:#222222">Usert Defined</div><div class="t" style="left:117.5px;top:463.60px;font-size:6.8px;letter-spacing:-0.402px;color:#222222">Errors</div><div class="t" style="left:148px;top:463.60px;font-size:6.8px;letter-spacing:-0.332px;color:#222222">Undersize/Oversize/Jumbo</div><div class="t" style="left:235.7px;top:463.60px;font-size:6.8px;letter-spacing:-0.343px;color:#222222">Protocols</div><div style="left:5px;top:474.7px;width:46.5px;height:1.6px;background:#3a63c6"></div><div style="left:5px;top:477.8px;width:1049px;height:20.5px;background:#eef0f3;border-top:1px solid #d6d6d6"></div><div style="left:5px;top:498.3px;width:1049px;height:13.399999999999977px;background:#ffffff"></div><div style="left:5px;top:510.9px;width:1049px;height:0.8px;background:#dcdfe3"></div><div style="left:5px;top:511.7px;width:1049px;height:12.599999999999966px;background:#e3eefb"></div><div style="left:5px;top:523.5px;width:1049px;height:0.8px;background:#dcdfe3"></div><div style="left:5px;top:524.3px;width:1049px;height:11.700000000000045px;background:#ffffff"></div><div style="left:5px;top:535.2px;width:1049px;height:0.8px;background:#dcdfe3"></div><div style="left:5px;top:536px;width:1049px;height:13px;background:#ffffff"></div><div style="left:5px;top:548.2px;width:1049px;height:0.8px;background:#dcdfe3"></div><div style="left:5px;top:497.8px;width:1049px;height:0.8px;background:#d6d6d6"></div><div style="left:5px;top:477.8px;width:14.7px;height:71.19999999999999px;background:#eef0f3"></div><svg style="position:absolute;left:10px;top:490px" width="7" height="6"><path d="M7 0V6H0Z" fill="#b6bdc8"/></svg><div class="t" style="left:8px;top:538.40px;font-size:7px;letter-spacing:0.000px;color:#222222">&Sigma;</div><div style="left:5px;top:477.8px;width:0.8px;height:71.19999999999999px;background:#dcdfe3"></div><div style="left:19.7px;top:477.8px;width:0.8px;height:71.19999999999999px;background:#dcdfe3"></div><div style="left:105.3px;top:477.8px;width:0.8px;height:71.19999999999999px;background:#dcdfe3"></div><div style="left:161.3px;top:477.8px;width:0.8px;height:71.19999999999999px;background:#dcdfe3"></div><div style="left:225.4px;top:477.8px;width:0.8px;height:71.19999999999999px;background:#dcdfe3"></div><div style="left:274.2px;top:477.8px;width:0.8px;height:71.19999999999999px;background:#dcdfe3"></div><div style="left:322.5px;top:477.8px;width:0.8px;height:71.19999999999999px;background:#dcdfe3"></div><div style="left:371.2px;top:477.8px;width:0.8px;height:71.19999999999999px;background:#dcdfe3"></div><div style="left:418.6px;top:477.8px;width:0.8px;height:71.19999999999999px;background:#dcdfe3"></div><div style="left:472.4px;top:477.8px;width:0.8px;height:71.19999999999999px;background:#dcdfe3"></div><div style="left:523.5px;top:477.8px;width:0.8px;height:71.19999999999999px;background:#dcdfe3"></div><div style="left:578.1px;top:477.8px;width:0.8px;height:71.19999999999999px;background:#dcdfe3"></div><div style="left:628.5px;top:477.8px;width:0.8px;height:71.19999999999999px;background:#dcdfe3"></div><div style="left:683px;top:477.8px;width:0.8px;height:71.19999999999999px;background:#dcdfe3"></div><div style="left:731.9px;top:477.8px;width:0.8px;height:71.19999999999999px;background:#dcdfe3"></div><div style="left:786px;top:477.8px;width:0.8px;height:71.19999999999999px;background:#dcdfe3"></div><div style="left:837.5px;top:477.8px;width:0.8px;height:71.19999999999999px;background:#dcdfe3"></div><div style="left:891.7px;top:477.8px;width:0.8px;height:71.19999999999999px;background:#dcdfe3"></div><div style="left:946.5px;top:477.8px;width:0.8px;height:71.19999999999999px;background:#dcdfe3"></div><div style="left:1001px;top:477.8px;width:0.8px;height:71.19999999999999px;background:#dcdfe3"></div><div class="t" style="left:23.0px;top:483.70px;font-size:6.8px;letter-spacing:-0.312px;color:#222222">Port Name</div><div class="t" style="left:109.6px;top:483.70px;font-size:6.8px;letter-spacing:-0.270px;color:#222222">Tx Stream Count</div><div class="t" style="left:165.60000000000002px;top:483.70px;font-size:6.8px;letter-spacing:-0.361px;color:#222222">Rx Stream Count</div><div class="t" style="left:229.70000000000002px;top:483.70px;font-size:6.8px;letter-spacing:-0.247px;color:#222222">Tx Total Count</div><div class="t" style="left:278.5px;top:483.70px;font-size:6.8px;letter-spacing:-0.336px;color:#222222">Rx Total Count</div><div class="t" style="left:325.5px;top:479.80px;font-size:6.8px;letter-spacing:-0.365px;color:#222222">Tx  Total Count</div><div class="t" style="left:325.5px;top:487.30px;font-size:6.8px;letter-spacing:-0.272px;color:#222222">(Bytes)</div><div class="t" style="left:374.2px;top:479.80px;font-size:6.8px;letter-spacing:-0.336px;color:#222222">Rx Total Count</div><div class="t" style="left:374.2px;top:487.30px;font-size:6.8px;letter-spacing:-0.272px;color:#222222">(Bytes)</div><div class="t" style="left:421.6px;top:479.80px;font-size:6.8px;letter-spacing:-0.365px;color:#222222">Tx  Total Count</div><div class="t" style="left:421.6px;top:487.30px;font-size:6.8px;letter-spacing:-0.222px;color:#222222">(bits)</div><div class="t" style="left:475.4px;top:479.80px;font-size:6.8px;letter-spacing:-0.336px;color:#222222">Rx Total Count</div><div class="t" style="left:475.4px;top:487.30px;font-size:6.8px;letter-spacing:-0.222px;color:#222222">(bits)</div><div class="t" style="left:526.5px;top:479.80px;font-size:6.8px;letter-spacing:-0.272px;color:#222222">Tx  Stream</div><div class="t" style="left:526.5px;top:487.30px;font-size:6.8px;letter-spacing:-0.317px;color:#222222">Rate (fps)</div><div class="t" style="left:581.1px;top:479.80px;font-size:6.8px;letter-spacing:-0.452px;color:#222222">Rx Stream</div><div class="t" style="left:581.1px;top:487.30px;font-size:6.8px;letter-spacing:-0.317px;color:#222222">Rate (fps)</div><div class="t" style="left:631.5px;top:479.80px;font-size:6.8px;letter-spacing:-0.466px;color:#222222">Tx  Byte Rate</div><div class="t" style="left:631.5px;top:487.30px;font-size:6.8px;letter-spacing:-0.436px;color:#222222">(Bps)</div><div class="t" style="left:686px;top:479.80px;font-size:6.8px;letter-spacing:-0.369px;color:#222222">Rx Byte Rate</div><div class="t" style="left:686px;top:487.30px;font-size:6.8px;letter-spacing:-0.436px;color:#222222">(Bps)</div><div class="t" style="left:734.9px;top:479.80px;font-size:6.8px;letter-spacing:-0.420px;color:#222222">Tx  Bit Rate</div><div class="t" style="left:734.9px;top:487.30px;font-size:6.8px;letter-spacing:-0.285px;color:#222222">(bps)</div><div class="t" style="left:789px;top:479.80px;font-size:6.8px;letter-spacing:-0.368px;color:#222222">Rx Bit Rate(</div><div class="t" style="left:789px;top:487.30px;font-size:6.8px;letter-spacing:-0.324px;color:#222222">bps)</div><div class="t" style="left:840.5px;top:479.80px;font-size:6.8px;letter-spacing:-0.430px;color:#222222">Tx  L1 Count</div><div class="t" style="left:840.5px;top:487.30px;font-size:6.8px;letter-spacing:-0.222px;color:#222222">(bits)</div><div class="t" style="left:894.7px;top:479.80px;font-size:6.8px;letter-spacing:-0.399px;color:#222222">Rx  L1 Count</div><div class="t" style="left:894.7px;top:487.30px;font-size:6.8px;letter-spacing:-0.222px;color:#222222">(bits)</div><div class="t" style="left:949.5px;top:479.80px;font-size:6.8px;letter-spacing:-0.435px;color:#222222">Tx  L1 Bit</div><div class="t" style="left:949.5px;top:487.30px;font-size:6.8px;letter-spacing:-0.271px;color:#222222">Rate (bps)</div><div class="t" style="left:1004px;top:479.80px;font-size:6.8px;letter-spacing:-0.254px;color:#222222">Rx L1 Bit</div><div class="t" style="left:1004px;top:487.30px;font-size:6.8px;letter-spacing:-0.271px;color:#222222">Rate (bps)</div><div class="t" style="left:23.2px;top:501.20px;font-size:6.8px;letter-spacing:-0.248px;color:#222222;font-style:italic">Port 1//10.26.124.181/1/1</div><div class="t" style="left:108.8px;top:501.20px;font-size:6.8px;letter-spacing:-0.077px;color:#222222;font-style:italic">Port.//7/8</div><div class="t" style="left:164.8px;top:501.20px;font-size:6.8px;letter-spacing:-0.168px;color:#222222;font-style:italic">N/A</div><div class="t" style="left:228.9px;top:501.20px;font-size:6.8px;letter-spacing:-0.278px;color:#222222;font-style:italic">0</div><div class="t" style="left:277.7px;top:501.20px;font-size:6.8px;letter-spacing:-0.278px;color:#222222;font-style:italic">0</div><div class="t" style="left:326.0px;top:501.20px;font-size:6.8px;letter-spacing:-0.271px;color:#222222;font-style:italic">267,711,542</div><div class="t" style="left:374.7px;top:501.20px;font-size:6.8px;letter-spacing:-0.278px;color:#222222;font-style:italic">0</div><div class="t" style="left:422.1px;top:501.20px;font-size:6.8px;letter-spacing:-0.271px;color:#222222;font-style:italic">267,711,542</div><div class="t" style="left:475.9px;top:501.20px;font-size:6.8px;letter-spacing:-0.278px;color:#222222;font-style:italic">0</div><div class="t" style="left:527.0px;top:501.20px;font-size:6.8px;letter-spacing:-0.271px;color:#222222;font-style:italic">267,711,542</div><div class="t" style="left:581.6px;top:501.20px;font-size:6.8px;letter-spacing:-0.278px;color:#222222;font-style:italic">0</div><div class="t" style="left:632.0px;top:501.20px;font-size:6.8px;letter-spacing:-0.271px;color:#222222;font-style:italic">267,711,542</div><div class="t" style="left:686.5px;top:501.20px;font-size:6.8px;letter-spacing:-0.278px;color:#222222;font-style:italic">0</div><div class="t" style="left:735.4px;top:501.20px;font-size:6.8px;letter-spacing:-0.271px;color:#222222;font-style:italic">267,711,542</div><div class="t" style="left:789.5px;top:501.20px;font-size:6.8px;letter-spacing:-0.278px;color:#222222;font-style:italic">0</div><div class="t" style="left:841.0px;top:501.20px;font-size:6.8px;letter-spacing:-0.271px;color:#222222;font-style:italic">267,711,542</div><div class="t" style="left:895.2px;top:501.20px;font-size:6.8px;letter-spacing:-0.278px;color:#222222;font-style:italic">0</div><div class="t" style="left:950.0px;top:501.20px;font-size:6.8px;letter-spacing:-0.271px;color:#222222;font-style:italic">267,711,542</div><div class="t" style="left:1004.5px;top:501.20px;font-size:6.8px;letter-spacing:-0.278px;color:#222222;font-style:italic">0</div><div class="t" style="left:23.2px;top:514.20px;font-size:6.8px;letter-spacing:-0.248px;color:#222222;font-style:italic">Port 2//10.26.124.181/1/2</div><div class="t" style="left:108.8px;top:514.20px;font-size:6.8px;letter-spacing:-0.077px;color:#222222;font-style:italic">Port.//7/8</div><div class="t" style="left:164.8px;top:514.20px;font-size:6.8px;letter-spacing:-0.168px;color:#222222;font-style:italic">N/A</div><div class="t" style="left:228.9px;top:514.20px;font-size:6.8px;letter-spacing:-0.278px;color:#222222;font-style:italic">0</div><div class="t" style="left:277.7px;top:514.20px;font-size:6.8px;letter-spacing:-0.278px;color:#222222;font-style:italic">0</div><div class="t" style="left:326.0px;top:514.20px;font-size:6.8px;letter-spacing:-0.306px;color:#222222;font-style:italic">1,484,130</div><div class="t" style="left:374.7px;top:514.20px;font-size:6.8px;letter-spacing:-0.278px;color:#222222;font-style:italic">0</div><div class="t" style="left:422.1px;top:514.20px;font-size:6.8px;letter-spacing:-0.306px;color:#222222;font-style:italic">1,484,130</div><div class="t" style="left:475.9px;top:514.20px;font-size:6.8px;letter-spacing:-0.278px;color:#222222;font-style:italic">0</div><div class="t" style="left:527.0px;top:514.20px;font-size:6.8px;letter-spacing:-0.306px;color:#222222;font-style:italic">1,484,130</div><div class="t" style="left:581.6px;top:514.20px;font-size:6.8px;letter-spacing:-0.278px;color:#222222;font-style:italic">0</div><div class="t" style="left:632.0px;top:514.20px;font-size:6.8px;letter-spacing:-0.306px;color:#222222;font-style:italic">1,484,130</div><div class="t" style="left:686.5px;top:514.20px;font-size:6.8px;letter-spacing:-0.278px;color:#222222;font-style:italic">0</div><div class="t" style="left:735.4px;top:514.20px;font-size:6.8px;letter-spacing:-0.306px;color:#222222;font-style:italic">1,484,130</div><div class="t" style="left:789.5px;top:514.20px;font-size:6.8px;letter-spacing:-0.278px;color:#222222;font-style:italic">0</div><div class="t" style="left:841.0px;top:514.20px;font-size:6.8px;letter-spacing:-0.306px;color:#222222;font-style:italic">1,484,130</div><div class="t" style="left:895.2px;top:514.20px;font-size:6.8px;letter-spacing:-0.278px;color:#222222;font-style:italic">0</div><div class="t" style="left:950.0px;top:514.20px;font-size:6.8px;letter-spacing:-0.306px;color:#222222;font-style:italic">1,484,130</div><div class="t" style="left:1004.5px;top:514.20px;font-size:6.8px;letter-spacing:-0.278px;color:#222222;font-style:italic">0</div><div class="t" style="left:23.2px;top:526.35px;font-size:6.8px;letter-spacing:-0.248px;color:#222222;font-style:italic">Port 3//10.26.124.181/1/3</div><div class="t" style="left:108.8px;top:526.35px;font-size:6.8px;letter-spacing:-0.077px;color:#222222;font-style:italic">Port.//7/8</div><div class="t" style="left:164.8px;top:526.35px;font-size:6.8px;letter-spacing:-0.168px;color:#222222;font-style:italic">N/A</div><div class="t" style="left:228.9px;top:526.35px;font-size:6.8px;letter-spacing:-0.278px;color:#222222;font-style:italic">0</div><div class="t" style="left:277.7px;top:526.35px;font-size:6.8px;letter-spacing:-0.278px;color:#222222;font-style:italic">0</div><div class="t" style="left:326.0px;top:526.35px;font-size:6.8px;letter-spacing:-0.306px;color:#222222;font-style:italic">1,484,130</div><div class="t" style="left:374.7px;top:526.35px;font-size:6.8px;letter-spacing:-0.278px;color:#222222;font-style:italic">0</div><div class="t" style="left:422.1px;top:526.35px;font-size:6.8px;letter-spacing:-0.306px;color:#222222;font-style:italic">1,484,130</div><div class="t" style="left:475.9px;top:526.35px;font-size:6.8px;letter-spacing:-0.278px;color:#222222;font-style:italic">0</div><div class="t" style="left:527.0px;top:526.35px;font-size:6.8px;letter-spacing:-0.306px;color:#222222;font-style:italic">1,484,130</div><div class="t" style="left:581.6px;top:526.35px;font-size:6.8px;letter-spacing:-0.278px;color:#222222;font-style:italic">0</div><div class="t" style="left:632.0px;top:526.35px;font-size:6.8px;letter-spacing:-0.306px;color:#222222;font-style:italic">1,484,130</div><div class="t" style="left:686.5px;top:526.35px;font-size:6.8px;letter-spacing:-0.278px;color:#222222;font-style:italic">0</div><div class="t" style="left:735.4px;top:526.35px;font-size:6.8px;letter-spacing:-0.306px;color:#222222;font-style:italic">1,484,130</div><div class="t" style="left:789.5px;top:526.35px;font-size:6.8px;letter-spacing:-0.278px;color:#222222;font-style:italic">0</div><div class="t" style="left:841.0px;top:526.35px;font-size:6.8px;letter-spacing:-0.306px;color:#222222;font-style:italic">1,484,130</div><div class="t" style="left:895.2px;top:526.35px;font-size:6.8px;letter-spacing:-0.278px;color:#222222;font-style:italic">0</div><div class="t" style="left:950.0px;top:526.35px;font-size:6.8px;letter-spacing:-0.306px;color:#222222;font-style:italic">1,484,130</div><div class="t" style="left:1004.5px;top:526.35px;font-size:6.8px;letter-spacing:-0.278px;color:#222222;font-style:italic">0</div><div class="t" style="left:326.0px;top:538.60px;font-size:6.8px;letter-spacing:-0.315px;color:#222222">3,422,222,222</div><div class="t" style="left:424.1px;top:538.60px;font-size:6.8px;letter-spacing:-0.278px;color:#222222">0</div><div class="t" style="left:527.0px;top:538.60px;font-size:6.8px;letter-spacing:-0.278px;color:#222222">128,562,992</div><div class="t" style="left:634.0px;top:538.60px;font-size:6.8px;letter-spacing:-0.343px;color:#222222">567,588,749.12</div><div class="t" style="left:735.4px;top:538.60px;font-size:6.8px;letter-spacing:-0.342px;color:#222222">5,345,229,234.92</div><div class="t" style="left:841.0px;top:538.60px;font-size:6.8px;letter-spacing:-0.342px;color:#222222">5,345,229,234.92</div><div class="t" style="left:895.2px;top:538.60px;font-size:6.8px;letter-spacing:-0.342px;color:#222222">5,345,229,234.92</div><div class="t" style="left:1004.5px;top:538.60px;font-size:6.8px;letter-spacing:-0.342px;color:#222222">5,345,229,234.92</div><div style="left:5px;top:549px;width:1049px;height:7px;background:#e9ebee"></div><div style="left:19.7px;top:550px;width:331px;height:5px;background:#8e9ab0"></div><svg style="position:absolute;left:8px;top:550.5px" width="4" height="4"><path d="M4 0V4L0 2Z" fill="#9aa6c0"/></svg><div style="left:4px;top:556px;width:1050px;height:18.5px;background:#fff;border:1px solid #d8d8d8;border-top:none"></div><div class="t" style="left:8px;top:561.40px;font-size:6.8px;letter-spacing:-0.125px;color:#222222">Total:&nbsp; 201 &nbsp;|&nbsp; Selected:&nbsp; 0</div><div style="left:0px;top:574.4px;width:1064px;height:25px;background:#e8f1fb"></div><div style="left:5px;top:576.8px;width:58.5px;height:10px;background:#fff;border:1px solid #cfd8e6"></div><div class="t" style="left:7.5px;top:576.90px;font-size:6.8px;letter-spacing:-0.210px;color:#222222">Stream Analyzer</div><div class="t" style="left:66.5px;top:577.40px;font-size:6.8px;letter-spacing:-0.322px;color:#222222">Test Suite Log</div><div style="left:117.5px;top:578px;width:0.8px;height:8px;background:#c8d0dc"></div><div class="t" style="left:124px;top:577.40px;font-size:6.8px;letter-spacing:-0.368px;color:#222222">Test Suite Analyzer</div><div style="left:190.5px;top:578px;width:0.8px;height:8px;background:#c8d0dc"></div><div class="t" style="left:196px;top:577.40px;font-size:6.8px;letter-spacing:-0.317px;color:#222222">Log(160)</div><div class="t" style="left:7px;top:589.00px;font-size:6.8px;letter-spacing:-0.272px;color:#222222">Sequencer finished.Elapsed time[00:00:17.189]</div><div style="left:0px;top:44px;width:1px;height:555px;background:#7f9edc"></div></div><div class="L" style="clip-path:inset(0 0 0 532px)"><div style="left:0px;top:0px;width:1064px;height:13px;background:#373737"></div><div style="left:0px;top:13px;width:1064px;height:18px;background:#3a3a3a"></div><div style="left:0px;top:12.5px;width:1064px;height:1.2px;background:#2a2a2a"></div><div style="left:0px;top:30.8px;width:1064px;height:1.3px;background:#141414"></div><div style="left:0px;top:32px;width:1052px;height:12px;background:#2d8ae0"></div><svg style="position:absolute;left:6px;top:2px" width="10" height="10"><defs><linearGradient id="lg" x1="0" y1="0" x2="0" y2="1"><stop offset="0" stop-color="#4aa8ff"/><stop offset="1" stop-color="#1a6ef0"/></linearGradient></defs><rect x="0.5" y="0.5" width="9" height="9" rx="2" fill="url(#lg)"/><text x="5" y="6.6" font-family="Liberation Sans" font-weight="bold" font-size="3.6" fill="#fff" text-anchor="middle">TeT</text></svg><div class="t" style="left:22px;top:1.90px;font-size:6.8px;letter-spacing:-0.119px;color:#e6e6e6">File</div><div class="t" style="left:43px;top:1.90px;font-size:6.8px;letter-spacing:0.228px;color:#e6e6e6">View</div><div class="t" style="left:70px;top:1.90px;font-size:6.8px;letter-spacing:0.034px;color:#e6e6e6">Actions</div><div class="t" style="left:102px;top:1.90px;font-size:6.8px;letter-spacing:-0.218px;color:#e6e6e6">Tools</div><div class="t" style="left:128px;top:1.90px;font-size:6.8px;letter-spacing:0.308px;color:#e6e6e6">About</div><div class="t" style="left:498px;top:1.90px;font-size:6.8px;letter-spacing:0.331px;color:#e6e6e6">Untitled.cfg-Tesgine</div><div style="left:1018px;top:6px;width:7px;height:1px;background:#e6e6e6"></div><div style="left:1034px;top:5px;width:6px;height:6px;border:1px solid #e6e6e6;border-radius:1px"></div><div style="left:1036px;top:3px;width:6px;height:6px;border-top:1px solid #e6e6e6;border-right:1px solid #e6e6e6"></div><svg style="position:absolute;left:1049px;top:3px" width="8" height="8"><path d="M1 1L7 7M7 1L1 7" stroke="#e6e6e6" stroke-width="1"/></svg><div style="left:1007px;top:37px;width:6px;height:1px;background:#fff"></div><svg style="position:absolute;left:1021px;top:33px" width="9" height="9"><rect x="1.5" y="1.5" width="6.5" height="6.5" fill="none" stroke="#fff" stroke-width="0.9"/><rect x="1.2" y="5" width="3" height="3" fill="#fff"/></svg><svg style="position:absolute;left:1038px;top:34px" width="8" height="8"><path d="M1 1L7 7M7 1L1 7" stroke="#fff" stroke-width="1"/></svg><div style="left:1052px;top:32px;width:12px;height:180px;background:#3a3a3a"></div><div style="left:1051.3px;top:44px;width:1.7px;height:168px;background:#2a6fb5"></div><div class="t" style="left:1053px;top:36px;font-size:7px;letter-spacing:-0.2px;color:#ececec;transform-origin:0 0;transform:translate(11px,0) rotate(90deg)">Agile Test</div><svg style="position:absolute;left:0;top:0" width="660" height="32"><path d="M8.5 17.5H15.5L18.5 20.5V27.8H8.5Z" fill="#e4e6ea" stroke="#666" stroke-width="0.9"/><path d="M15.5 17.5V20.5H18.5" fill="#fff" stroke="#666" stroke-width="0.7"/><path d="M28 19H32L33 20H38V27.5H28Z" fill="#d8a860" stroke="#a07840" stroke-width="0.7"/><path d="M28.5 22H39.5L38 27.5H28Z" fill="#f8dc98" stroke="#a07840" stroke-width="0.6"/><rect x="48.3" y="17.3" width="10" height="10.5" rx="0.8" fill="#3d7ad8" stroke="#2a5aa8" stroke-width="0.6"/><rect x="50.5" y="17.5" width="5.5" height="3" fill="#ffffff"/><rect x="50.3" y="23" width="6" height="4.5" fill="#dfe3ea"/><rect x="67.3" y="17.3" width="10" height="10.5" rx="0.8" fill="#3d7ad8" stroke="#2a5aa8" stroke-width="0.6"/><rect x="69.5" y="17.5" width="5.5" height="3" fill="#ffffff"/><rect x="69.3" y="23" width="6" height="4.5" fill="#dfe3ea"/><path d="M73 27.5L78.5 21" stroke="#f0c020" stroke-width="2.6"/><path d="M77.5 20.2L79.5 22" stroke="#e02828" stroke-width="2"/><rect x="94" y="19" width="11" height="7" rx="1.5" fill="#9a9a9a"/><rect x="95" y="21.5" width="8" height="3" fill="#d0d4dc"/><rect x="95.2" y="21.8" width="2.5" height="2" fill="#4a90e2"/><rect x="95" y="19.8" width="9" height="1" fill="#e8e8e8"/><circle cx="104" cy="26" r="3" fill="#1cc07a" stroke="#666" stroke-width="0.6"/><rect x="114" y="19" width="11" height="7" rx="1.5" fill="#9a9a9a"/><rect x="115" y="21.5" width="8" height="3" fill="#d0d4dc"/><rect x="115.2" y="21.8" width="2.5" height="2" fill="#4a90e2"/><rect x="115" y="19.8" width="9" height="1" fill="#e8e8e8"/><circle cx="124" cy="26" r="3" fill="#9a9a9a" stroke="#666" stroke-width="0.6"/><path d="M142 23H153V28H142Z" fill="#9a9a9a"/><rect x="143" y="24.5" width="8" height="2" fill="#d8dce4"/><rect x="143" y="24.5" width="2.5" height="1.5" fill="#4a90e2"/><path d="M145.5 16.5H149.5V19.5H152L147.5 23.5L143 19.5H145.5Z" fill="#1cc07a"/><rect x="190" y="17" width="9" height="4" rx="1" fill="none" stroke="#777" stroke-width="1"/><rect x="189" y="21" width="10" height="7" rx="1" fill="#8a8a8a"/><rect x="190" y="23" width="5" height="3" fill="#cfd6e0"/><path d="M195 22L200 25L195 28Z" fill="#1cc07a"/><rect x="210" y="18" width="9" height="4" rx="1" fill="none" stroke="#d0d0d0" stroke-width="1"/><rect x="209" y="22" width="10" height="6" rx="1" fill="#e6e6e6" stroke="#d0d0d0" stroke-width="0.8"/><rect x="216" y="24" width="5" height="5" rx="1" fill="#e0e0e0" stroke="#c8c8c8" stroke-width="0.8"/><rect x="229" y="17" width="11" height="11" fill="#4a7ad0"/><rect x="229" y="17" width="2" height="11" fill="#c8a028"/><rect x="238.5" y="17" width="1.8" height="11" fill="#3060b0"/><rect x="231.5" y="19" width="6" height="6" fill="#dfe8f8"/><path d="M235.5 22L240.5 25L235.5 28Z" fill="#1cc07a"/><rect x="250" y="18" width="9" height="4" rx="1" fill="none" stroke="#d0d0d0" stroke-width="1"/><rect x="249" y="22" width="10" height="6" rx="1" fill="#e6e6e6" stroke="#d0d0d0" stroke-width="0.8"/><rect x="256" y="24" width="5" height="5" rx="1" fill="#e0e0e0" stroke="#c8c8c8" stroke-width="0.8"/><rect x="268.5" y="17" width="10.5" height="11" fill="#7a7a7a"/><path d="M269.5 19.5H278M269.5 22H278M269.5 24.5H278" stroke="#e8e8e8" stroke-width="0.9"/><path d="M275.5 23L280.5 26L275.5 29Z" fill="#1cc07a"/><rect x="290" y="18" width="9" height="4" rx="1" fill="none" stroke="#d0d0d0" stroke-width="1"/><rect x="289" y="22" width="10" height="6" rx="1" fill="#e6e6e6" stroke="#d0d0d0" stroke-width="0.8"/><rect x="296" y="24" width="5" height="5" rx="1" fill="#e0e0e0" stroke="#c8c8c8" stroke-width="0.8"/><circle cx="353" cy="20" r="1" fill="#222"/><circle cx="353" cy="24.5" r="1" fill="#222"/><rect x="355" y="17" width="8" height="11" rx="2" fill="#8a8a8a"/><path d="M356 20H362M356 23H362" stroke="#eee" stroke-width="0.9"/><path d="M359 23L364 26L359 29Z" fill="#1cc07a"/><rect x="374" y="18" width="9" height="4" rx="1" fill="none" stroke="#d0d0d0" stroke-width="1"/><rect x="373" y="22" width="10" height="6" rx="1" fill="#e6e6e6" stroke="#d0d0d0" stroke-width="0.8"/><rect x="380" y="24" width="5" height="5" rx="1" fill="#e0e0e0" stroke="#c8c8c8" stroke-width="0.8"/><rect x="391" y="17" width="8.5" height="11" rx="2" fill="#8a8a8a"/><path d="M392 20H398.5M392 23H398.5" stroke="#eee" stroke-width="0.9"/><path d="M398 19.5L402.5 23.5L398 27.5L393.5 23.5Z" fill="#5a9af0" stroke="#3a70c8" stroke-width="0.6"/><rect x="419.5" y="20" width="4.5" height="4.5" rx="0.6" fill="#3a7ae8"/><path d="M424 22.3H426M426 18.5H428.5V27H426M426 22.3H428.5" fill="none" stroke="#888" stroke-width="1"/><path d="M458 21H463L460.5 24Z" fill="#222"/><rect x="478.5" y="17" width="5" height="9" fill="#7a7a7a"/><rect x="484.5" y="17" width="5" height="9" fill="#7a7a7a"/><path d="M479 26L486 21.5L489.5 23L482.5 28Z" fill="#1cc07a"/><defs><linearGradient id="tg" x1="0" y1="0" x2="1" y2="1"><stop offset="0" stop-color="#ff4040"/><stop offset="0.35" stop-color="#ffd020"/><stop offset="0.6" stop-color="#30e060"/><stop offset="0.8" stop-color="#20a0ff"/><stop offset="1" stop-color="#c040ff"/></linearGradient></defs><path d="M567 18L569 17.5Q569.8 19 570.5 17.5L572.5 18L575.5 20.5L574 22.5L572.8 21.8V27H567V21.8L565.5 22.5L564 20.5Z" fill="url(#tg)"/></svg><div style="left:638.2px;top:17.3px;width:8px;height:10.4px;background:#474747;border-radius:1px"></div><svg style="position:absolute;left:639px;top:19px" width="6" height="7"><rect x="1.5" y="0.5" width="3" height="1" fill="#eee"/><path d="M0.5 2.5H5.5L3 5.5Z" fill="#eee"/></svg><div style="left:86.5px;top:15px;width:1px;height:14px;background:#4a4a4a"></div><div style="left:133.5px;top:15px;width:1px;height:14px;background:#4a4a4a"></div><div style="left:181.3px;top:15px;width:1px;height:14px;background:#4a4a4a"></div><div style="left:343.8px;top:15px;width:1px;height:14px;background:#4a4a4a"></div><div style="left:410.6px;top:15px;width:1px;height:14px;background:#4a4a4a"></div><div style="left:470.4px;top:15px;width:1px;height:14px;background:#4a4a4a"></div><div style="left:556.3px;top:15px;width:1px;height:14px;background:#4a4a4a"></div><div class="t" style="left:157px;top:17.40px;font-size:6.8px;letter-spacing:-0.102px;color:#e6e6e6">Apply</div><div class="t" style="left:307px;top:17.40px;font-size:6.8px;letter-spacing:-0.281px;color:#e6e6e6">00:03:16</div><div class="t" style="left:433px;top:17.40px;font-size:6.8px;letter-spacing:-0.371px;color:#e6e6e6">Wizard</div><div class="t" style="left:493px;top:17.40px;font-size:6.8px;letter-spacing:-0.146px;color:#e6e6e6">Change BS Server</div><div class="t" style="left:579px;top:17.40px;font-size:6.8px;letter-spacing:-0.077px;color:#e6e6e6">Change Theme</div><div style="left:2px;top:34px;width:78px;height:10px;background:#2a2a2a"></div><div class="t" style="left:7px;top:33.90px;font-size:6.8px;letter-spacing:-0.125px;color:#2b88de;font-weight:bold">Test Configuration</div><div style="left:0px;top:44px;width:1052px;height:168px;background:#2a2a2a"></div><div style="left:125px;top:44px;width:1.5px;height:168px;background:#3c3c3c"></div><div class="t" style="left:131px;top:49.10px;font-size:6.8px;letter-spacing:-0.460px;color:#2b88de;font-weight:bold">Stream Block</div><div style="left:130px;top:61px;width:920px;height:1.2px;background:#404040"></div><div style="left:131px;top:60.5px;width:46px;height:1.6px;background:#2b88de"></div><div style="left:131px;top:67.5px;width:32px;height:14px;background:#3a3a3a;border:1px solid #4a4a4a;border-radius:2px"></div><div class="t" style="left:146px;top:70.00px;font-size:6.8px;letter-spacing:-0.049px;color:#ececec">Add</div><div style="left:167.3px;top:67.5px;width:40.2px;height:14px;background:#3a3a3a;border:1px solid #4a4a4a;border-radius:2px"></div><div class="t" style="left:183px;top:70.00px;font-size:6.8px;letter-spacing:-0.331px;color:#ececec">Delete</div><div style="left:211.3px;top:67.5px;width:32.2px;height:14px;background:#3a3a3a;border:1px solid #4a4a4a;border-radius:2px"></div><div class="t" style="left:227px;top:70.00px;font-size:6.8px;letter-spacing:-0.239px;color:#ececec">Edit</div><svg style="position:absolute;left:134px;top:69px" width="11" height="11"><path d="M0.5 1.5H8.5M0.5 4H8.5M0.5 6.5H6M0.5 9H5" stroke="#666" stroke-width="1.2"/><path d="M2.5 0.5V9.5M5.5 0.5V7" stroke="#666" stroke-width="0.8"/><rect x="6.5" y="6.5" width="4" height="4" rx="0.8" fill="#3a8ef0"/></svg><svg style="position:absolute;left:173px;top:69px" width="8" height="11"><rect x="0.5" y="0.3" width="6" height="1.8" fill="#f07858"/><rect x="1" y="2" width="5" height="8.3" rx="1" fill="#e8e8e8" stroke="#8a8a8a" stroke-width="0.8"/><path d="M2.8 3.5V8.8M4.3 3.5V8.8" stroke="#8a8a8a" stroke-width="0.6"/></svg><svg style="position:absolute;left:216px;top:69px" width="10" height="11"><path d="M2 8.5L7.5 2.5" stroke="#f0c020" stroke-width="2.6"/><path d="M6.8 1.5L8.8 3.5" stroke="#e02828" stroke-width="2"/><path d="M1 10H8" stroke="#444" stroke-width="0.9"/></svg><div style="left:520px;top:85.6px;width:530px;height:20.700000000000003px;background:#3a3a3a;border-top:1px solid #3c3c3c"></div><div style="left:520px;top:106.3px;width:530px;height:105.7px;background:#2a2a2a"></div><div style="left:520px;top:106.3px;width:530px;height:1px;background:#303030"></div><div style="left:520px;top:119.6px;width:530px;height:1px;background:#303030"></div><div style="left:520px;top:132.9px;width:530px;height:1px;background:#303030"></div><div style="left:520px;top:146.2px;width:530px;height:1px;background:#303030"></div><div style="left:520px;top:159.5px;width:530px;height:1px;background:#303030"></div><div style="left:520px;top:172.8px;width:530px;height:1px;background:#303030"></div><div style="left:520px;top:186.10000000000002px;width:530px;height:1px;background:#303030"></div><div style="left:520px;top:199.4px;width:530px;height:1px;background:#303030"></div><div style="left:520px;top:105.3px;width:530px;height:1px;background:#3c3c3c"></div><div style="left:520px;top:85.6px;width:1px;height:126.4px;background:#303030"></div><div style="left:532px;top:85.6px;width:1px;height:126.4px;background:#303030"></div><div style="left:540px;top:85.6px;width:1px;height:126.4px;background:#303030"></div><div style="left:610.5px;top:85.6px;width:1px;height:126.4px;background:#303030"></div><div style="left:678.4px;top:85.6px;width:1px;height:126.4px;background:#303030"></div><div style="left:748.3px;top:85.6px;width:1px;height:126.4px;background:#303030"></div><div style="left:832.6px;top:85.6px;width:1px;height:126.4px;background:#303030"></div><div style="left:540px;top:106.3px;width:70.5px;height:105.7px;background:#262626"></div><div style="left:678.4px;top:106.3px;width:372px;height:105.7px;background:#262626"></div><div style="left:532px;top:106.3px;width:8px;height:105.7px;background:#303030"></div><div style="left:610.5px;top:106.3px;width:68px;height:105.7px;background:#323232"></div><div class="t" style="left:541.5px;top:108.30px;font-size:6.8px;letter-spacing:-0.457px;color:#ececec">Fixed</div><div class="t" style="left:680.5px;top:108.30px;font-size:6.8px;letter-spacing:-0.522px;color:#ececec">128</div><div class="t" style="left:750.5px;top:108.30px;font-size:6.8px;letter-spacing:-0.522px;color:#ececec">128</div><div class="t" style="left:834.5px;top:108.30px;font-size:6.8px;letter-spacing:-0.522px;color:#ececec">128</div><div class="t" style="left:541.5px;top:121.60px;font-size:6.8px;letter-spacing:-0.457px;color:#ececec">Fixed</div><div class="t" style="left:680.5px;top:121.60px;font-size:6.8px;letter-spacing:-0.522px;color:#ececec">128</div><div class="t" style="left:750.5px;top:121.60px;font-size:6.8px;letter-spacing:-0.522px;color:#ececec">128</div><div class="t" style="left:834.5px;top:121.60px;font-size:6.8px;letter-spacing:-0.522px;color:#ececec">128</div><div class="t" style="left:541.5px;top:134.90px;font-size:6.8px;letter-spacing:-0.457px;color:#ececec">Fixed</div><div class="t" style="left:680.5px;top:134.90px;font-size:6.8px;letter-spacing:-0.522px;color:#ececec">128</div><div class="t" style="left:750.5px;top:134.90px;font-size:6.8px;letter-spacing:-0.522px;color:#ececec">128</div><div class="t" style="left:834.5px;top:134.90px;font-size:6.8px;letter-spacing:-0.522px;color:#ececec">128</div><div class="t" style="left:541.5px;top:148.20px;font-size:6.8px;letter-spacing:-0.457px;color:#ececec">Fixed</div><div class="t" style="left:680.5px;top:148.20px;font-size:6.8px;letter-spacing:-0.522px;color:#ececec">128</div><div class="t" style="left:750.5px;top:148.20px;font-size:6.8px;letter-spacing:-0.522px;color:#ececec">128</div><div class="t" style="left:834.5px;top:148.20px;font-size:6.8px;letter-spacing:-0.522px;color:#ececec">128</div><div class="t" style="left:541.5px;top:161.50px;font-size:6.8px;letter-spacing:-0.457px;color:#ececec">Fixed</div><div class="t" style="left:680.5px;top:161.50px;font-size:6.8px;letter-spacing:-0.522px;color:#ececec">128</div><div class="t" style="left:750.5px;top:161.50px;font-size:6.8px;letter-spacing:-0.522px;color:#ececec">128</div><div class="t" style="left:834.5px;top:161.50px;font-size:6.8px;letter-spacing:-0.522px;color:#ececec">128</div><div class="t" style="left:541.5px;top:174.80px;font-size:6.8px;letter-spacing:-0.457px;color:#ececec">Fixed</div><div class="t" style="left:680.5px;top:174.80px;font-size:6.8px;letter-spacing:-0.522px;color:#ececec">128</div><div class="t" style="left:750.5px;top:174.80px;font-size:6.8px;letter-spacing:-0.522px;color:#ececec">128</div><div class="t" style="left:834.5px;top:174.80px;font-size:6.8px;letter-spacing:-0.522px;color:#ececec">128</div><div class="t" style="left:541.5px;top:188.10px;font-size:6.8px;letter-spacing:-0.457px;color:#ececec">Fixed</div><div class="t" style="left:680.5px;top:188.10px;font-size:6.8px;letter-spacing:-0.522px;color:#ececec">128</div><div class="t" style="left:750.5px;top:188.10px;font-size:6.8px;letter-spacing:-0.522px;color:#ececec">128</div><div class="t" style="left:834.5px;top:188.10px;font-size:6.8px;letter-spacing:-0.522px;color:#ececec">128</div><div class="t" style="left:541.5px;top:201.40px;font-size:6.8px;letter-spacing:-0.457px;color:#ececec">Fixed</div><div class="t" style="left:680.5px;top:201.40px;font-size:6.8px;letter-spacing:-0.522px;color:#ececec">128</div><div class="t" style="left:750.5px;top:201.40px;font-size:6.8px;letter-spacing:-0.522px;color:#ececec">128</div><div class="t" style="left:834.5px;top:201.40px;font-size:6.8px;letter-spacing:-0.522px;color:#ececec">128</div><div class="t" style="left:541.5px;top:91.70px;font-size:6.8px;letter-spacing:-0.289px;color:#ececec">Frame Length Mode</div><div class="t" style="left:612.0px;top:91.70px;font-size:6.8px;letter-spacing:-0.294px;color:#ececec">IMIX Model Name</div><div class="t" style="left:679.9px;top:91.70px;font-size:6.8px;letter-spacing:-0.350px;color:#ececec">Fixed Frame Length</div><div class="t" style="left:749.8px;top:91.70px;font-size:6.8px;letter-spacing:-0.284px;color:#ececec">Minimum Frame Length</div><div class="t" style="left:834.1px;top:91.70px;font-size:6.8px;letter-spacing:-0.342px;color:#ececec">Maximum Frame Length</div><div style="left:520px;top:119.1px;width:530px;height:0.8px;background:#303030"></div><div style="left:520px;top:132.4px;width:530px;height:0.8px;background:#303030"></div><div style="left:520px;top:145.7px;width:530px;height:0.8px;background:#303030"></div><div style="left:520px;top:159.0px;width:530px;height:0.8px;background:#303030"></div><div style="left:520px;top:172.3px;width:530px;height:0.8px;background:#303030"></div><div style="left:520px;top:185.60000000000002px;width:530px;height:0.8px;background:#303030"></div><div style="left:520px;top:198.9px;width:530px;height:0.8px;background:#303030"></div><div style="left:540px;top:106.3px;width:0.8px;height:105.7px;background:#303030"></div><div style="left:610.5px;top:106.3px;width:0.8px;height:105.7px;background:#303030"></div><div style="left:678.4px;top:106.3px;width:0.8px;height:105.7px;background:#303030"></div><div style="left:748.3px;top:106.3px;width:0.8px;height:105.7px;background:#303030"></div><div style="left:832.6px;top:106.3px;width:0.8px;height:105.7px;background:#303030"></div><div style="left:0px;top:212px;width:1064px;height:10px;background:#393939"></div><div style="left:0px;top:221.5px;width:1064px;height:1px;background:#2a2a2a"></div><div style="left:1019.5px;top:216.5px;width:6px;height:1px;background:#dddddd"></div><svg style="position:absolute;left:1033px;top:212.0px" width="9" height="9"><rect x="1.5" y="1.5" width="6.5" height="6.5" fill="none" stroke="#dddddd" stroke-width="0.9"/><rect x="1.2" y="5" width="3" height="3" fill="#dddddd"/></svg><svg style="position:absolute;left:1050px;top:213.0px" width="7" height="7"><path d="M0.5 0.5L6.5 6.5M6.5 0.5L0.5 6.5" stroke="#dddddd" stroke-width="1"/></svg><div style="left:0px;top:222.5px;width:1064px;height:203px;background:#2a2a2a"></div><div class="t" style="left:4px;top:229.90px;font-size:6.8px;letter-spacing:0.205px;color:#ececec;font-weight:bold">Access&gt; Chart</div><div style="left:59px;top:227px;width:1px;height:14px;background:#4a4a4a"></div><div style="left:63px;top:227px;width:82px;height:13.5px;background:#2a2a2a;border:1px solid #4a4a4a;border-radius:2px"></div><div class="t" style="left:68px;top:229.55px;font-size:6.8px;letter-spacing:-0.044px;color:#ececec">Change Result Views</div><svg style="position:absolute;left:135px;top:231.75px" width="6" height="4"><path d="M0 0H6L3 4Z" fill="#ececec"/></svg><div style="left:150px;top:227px;width:1px;height:14px;background:#4a4a4a"></div><div style="left:154.5px;top:227px;width:14px;height:13.5px;background:#3a3a3a;border:1px solid #4a4a4a;border-radius:2px"></div><div style="left:172.2px;top:227px;width:14px;height:13.5px;background:#3a3a3a;border:1px solid #4a4a4a;border-radius:2px"></div><div style="left:190px;top:227px;width:14px;height:13.5px;background:#3a3a3a;border:1px solid #4a4a4a;border-radius:2px"></div><div style="left:208px;top:227px;width:14px;height:13.5px;background:#3a3a3a;border:1px solid #4a4a4a;border-radius:2px"></div><div style="left:226px;top:227px;width:14px;height:13.5px;background:#3a3a3a;border:1px solid #4a4a4a;border-radius:2px"></div><div style="left:243.5px;top:227px;width:14px;height:13.5px;background:#3a3a3a;border:1px solid #4a4a4a;border-radius:2px"></div><div style="left:261.5px;top:227px;width:14px;height:13.5px;background:#3a3a3a;border:1px solid #4a4a4a;border-radius:2px"></div><div style="left:158px;top:230px;width:8px;height:7.5px;border:1px solid #666;border-top:2px solid #3a70c0;background:#fff"></div><div style="left:162px;top:233px;width:4px;height:4px;background:#e8a020;transform:rotate(45deg)"></div><div style="left:176.5px;top:230.5px;width:2px;height:7px;background:#d62020"></div><div style="left:180.5px;top:230.5px;width:2px;height:7px;background:#d62020"></div><div style="left:193.5px;top:230px;width:6px;height:8px;background:#8a8a8a;border-radius:2px"></div><svg style="position:absolute;left:197px;top:232px" width="6" height="6"><path d="M0 1H3V0L6 3L3 6V5H0Z" fill="#4a90e2"/></svg><svg style="position:absolute;left:210px;top:229px" width="10" height="10"><path d="M2 7L7 2" stroke="#666" stroke-width="2"/><path d="M1 9H9" stroke="#f08030" stroke-width="1"/></svg><div style="left:229px;top:230px;width:7px;height:8px;background:#3a70c0;border-radius:1px"></div><div style="left:232px;top:234px;width:5px;height:5px;background:#ddd;border:1px solid #666"></div><div style="left:246.5px;top:230px;width:7px;height:8px;background:#3a70c0;border-radius:1px"></div><div style="left:249.5px;top:234px;width:5px;height:5px;background:#ddd;border:1px solid #666"></div><div style="left:264.5px;top:230px;width:8px;height:8px;border:1px solid #666;background:#fff"></div><div style="left:266px;top:235px;width:6px;height:2px;background:#3a70c0"></div><div style="left:279px;top:227px;width:1px;height:14px;background:#4a4a4a"></div><div class="t" style="left:285px;top:229.80px;font-size:6.8px;letter-spacing:0.034px;color:#ececec">Show Ports:</div><div style="left:326px;top:227px;width:82px;height:13.5px;background:#2a2a2a;border:1px solid #4a4a4a;border-radius:2px"></div><div class="t" style="left:331px;top:229.55px;font-size:6.8px;letter-spacing:0.155px;color:#ececec">Ports//10.44143.6...</div><svg style="position:absolute;left:398px;top:231.75px" width="6" height="4"><path d="M0 0H6L3 4Z" fill="#ececec"/></svg><svg style="position:absolute;left:0;top:0" width="1064" height="599"><line x1="21" y1="268.5" x2="872" y2="268.5" stroke="#303030" stroke-width="1"/><line x1="21" y1="296.8" x2="872" y2="296.8" stroke="#303030" stroke-width="1"/><line x1="21" y1="325" x2="872" y2="325" stroke="#303030" stroke-width="1"/><line x1="21" y1="353.5" x2="872" y2="353.5" stroke="#303030" stroke-width="1"/><line x1="21" y1="381" x2="872" y2="381" stroke="#303030" stroke-width="1"/><line x1="121" y1="257" x2="121" y2="392" stroke="#303030" stroke-width="1"/><line x1="124" y1="392" x2="124" y2="394" stroke="#4a4a4a" stroke-width="1"/><line x1="227.5" y1="257" x2="227.5" y2="392" stroke="#303030" stroke-width="1"/><line x1="230.5" y1="392" x2="230.5" y2="394" stroke="#4a4a4a" stroke-width="1"/><line x1="334" y1="257" x2="334" y2="392" stroke="#303030" stroke-width="1"/><line x1="337" y1="392" x2="337" y2="394" stroke="#4a4a4a" stroke-width="1"/><line x1="440.5" y1="257" x2="440.5" y2="392" stroke="#303030" stroke-width="1"/><line x1="443.5" y1="392" x2="443.5" y2="394" stroke="#4a4a4a" stroke-width="1"/><line x1="547" y1="257" x2="547" y2="392" stroke="#303030" stroke-width="1"/><line x1="550" y1="392" x2="550" y2="394" stroke="#4a4a4a" stroke-width="1"/><line x1="653.5" y1="257" x2="653.5" y2="392" stroke="#303030" stroke-width="1"/><line x1="656.5" y1="392" x2="656.5" y2="394" stroke="#4a4a4a" stroke-width="1"/><line x1="760" y1="257" x2="760" y2="392" stroke="#303030" stroke-width="1"/><line x1="763" y1="392" x2="763" y2="394" stroke="#4a4a4a" stroke-width="1"/><path d="M20.5 392V256.5H872" fill="none" stroke="#4a4a4a" stroke-width="1"/><line x1="20.5" y1="392.3" x2="872" y2="392.3" stroke="#4a4a4a" stroke-width="1.2"/><path d="M871.5 256.5V392.5" fill="none" stroke="#4a4a4a" stroke-width="1"/><polyline points="20,314 79,334 198.5,329 319,307.4 440.3,311.7 559.5,282 679.5,311.3 800.5,305.3 861,312.6" fill="none" stroke="#f0457a" stroke-width="1.3" stroke-linejoin="round"/><polyline points="20,319 79,311 198.5,327.7 319,315.5 440.3,324.8 559.5,275 679.5,291.6 800.5,319.2 861,315.8" fill="none" stroke="#14a06e" stroke-width="1.3" stroke-linejoin="round"/><polyline points="20,318 79,315.5 198.5,333.7 319,312.6 440.3,311.7 559.5,278.8 679.5,308.7 800.5,299.5 861,311.3" fill="none" stroke="#f0a030" stroke-width="1.3" stroke-linejoin="round"/><polyline points="20,325 79,335 198.5,331.4 319,309.8 440.3,322 559.5,272.8 679.5,284 800.5,312.6 861,318.4" fill="none" stroke="#46c6e6" stroke-width="1.3" stroke-linejoin="round"/><polyline points="20,320 79,326 198.5,337 319,323 440.3,330.5 559.5,291.6 679.5,282.4 800.5,315.3 861,306" fill="none" stroke="#b86ef2" stroke-width="1.3" stroke-linejoin="round"/><polyline points="20,316.4 79,336.7 198.5,340.8 319,314 440.3,319.8 559.5,277 679.5,282.4 800.5,315.8 861,315.3" fill="none" stroke="#2f6cf0" stroke-width="1.3" stroke-linejoin="round"/><polyline points="20,311 79,331.4 198.5,345.5 319,318.3 440.3,326.7 559.5,284 679.5,277.9 800.5,304.7 861,315.3" fill="none" stroke="#18a0b0" stroke-width="1.3" stroke-linejoin="round"/><polyline points="20,327.7 79,320 198.5,342.7 319,313.6 440.3,323 559.5,276 679.5,306 800.5,302 861,314" fill="none" stroke="#5ed6a6" stroke-width="1.3" stroke-linejoin="round"/><polyline points="20,314 79,317.3 198.5,344.6 319,334.8 440.3,315.5 559.5,280.7 679.5,293.7 800.5,322.6 861,314" fill="none" stroke="#e5532c" stroke-width="1.3" stroke-linejoin="round"/><rect x="20" y="410" width="848" height="13" fill="#2f2f2f"/><path d="M20 416 C100 415 180 414 300 413.5 S420 417 520 415 S600 413 650 414 S700 416 716 415 V423 H20Z" fill="#454545"/><path d="M719 418 C740 417 770 415 788 415.5 S810 419 823 419.5 S850 416 868 416 V423 H719Z" fill="#4a5470"/><rect x="714.5" y="410.5" width="4.5" height="9" rx="1" fill="#6a6a6a"/></svg><div class="t" style="left:0;width:16.5px;text-align:right;top:254.3px;font-size:6.6px;color:#999">12</div><div class="t" style="left:0;width:16.5px;text-align:right;top:276.4px;font-size:6.6px;color:#999">10</div><div class="t" style="left:0;width:16.5px;text-align:right;top:298.6px;font-size:6.6px;color:#999">8</div><div class="t" style="left:0;width:16.5px;text-align:right;top:320.5px;font-size:6.6px;color:#999">6</div><div class="t" style="left:0;width:16.5px;text-align:right;top:342.5px;font-size:6.6px;color:#999">4</div><div class="t" style="left:0;width:16.5px;text-align:right;top:365px;font-size:6.6px;color:#999">2</div><div class="t" style="left:0;width:16.5px;text-align:right;top:387.4px;font-size:6.6px;color:#999">0</div><div class="t" style="left:98.3px;width:40px;text-align:center;top:395.6px;font-size:6.6px;color:#999;letter-spacing:0.3px">21:11:38</div><div class="t" style="left:205px;width:40px;text-align:center;top:395.6px;font-size:6.6px;color:#999;letter-spacing:0.3px">21:11:57</div><div class="t" style="left:315px;width:40px;text-align:center;top:395.6px;font-size:6.6px;color:#999;letter-spacing:0.3px">21:12:16</div><div class="t" style="left:420.5px;width:40px;text-align:center;top:395.6px;font-size:6.6px;color:#999;letter-spacing:0.3px">21:12:35</div><div class="t" style="left:528px;width:40px;text-align:center;top:395.6px;font-size:6.6px;color:#999;letter-spacing:0.3px">21:12:54</div><div class="t" style="left:636px;width:40px;text-align:center;top:395.6px;font-size:6.6px;color:#999;letter-spacing:0.3px">21:13:13</div><div class="t" style="left:742px;width:40px;text-align:center;top:395.6px;font-size:6.6px;color:#999;letter-spacing:0.3px">21:13:32</div><div style="left:876px;top:256px;width:186px;height:166px;background:#262626;border:1px solid #3a3a3a"></div><div style="left:877px;top:258px;width:184px;height:15px;background:#363636"></div><div style="left:877px;top:258px;width:10px;height:121.5px;background:#303030"></div><svg style="position:absolute;left:879px;top:266px" width="6" height="5"><path d="M6 0V5H0Z" fill="#888"/></svg><div style="left:886.5px;top:258px;width:1px;height:121.5px;background:#3a3a3a"></div><div style="left:912px;top:258px;width:1px;height:121.5px;background:#3a3a3a"></div><div class="t" style="left:888.8px;top:262.20px;font-size:6.8px;letter-spacing:-0.087px;color:#ececec">Color</div><div class="t" style="left:915.2px;top:262.20px;font-size:6.8px;letter-spacing:-0.265px;color:#ececec">Counter</div><div style="left:887px;top:286.3px;width:174px;height:0.8px;background:#333"></div><div style="left:895.2px;top:277.0px;width:5.4px;height:5.4px;background:#2f6cf0;border-radius:50%"></div><div class="t" style="left:915px;top:275.00px;font-size:6.8px;letter-spacing:-0.272px;color:#ececec">Port 1//10.26.124.181/1/11.TX Stream Count</div><div style="left:887px;top:299.6px;width:174px;height:0.8px;background:#333"></div><div style="left:895.2px;top:290.3px;width:5.4px;height:5.4px;background:#14a06e;border-radius:50%"></div><div class="t" style="left:915px;top:288.30px;font-size:6.8px;letter-spacing:-0.266px;color:#ececec">Port 2//10.26.124.181/1/10.RX Stream Count</div><div style="left:887px;top:312.90000000000003px;width:174px;height:0.8px;background:#333"></div><div style="left:895.2px;top:303.6px;width:5.4px;height:5.4px;background:#b86ef2;border-radius:50%"></div><div class="t" style="left:915px;top:301.60px;font-size:6.8px;letter-spacing:-0.275px;color:#ececec">Port 3//10.26.124.181/1/9.RX Stream Count</div><div style="left:887px;top:326.2px;width:174px;height:0.8px;background:#333"></div><div style="left:895.2px;top:316.9px;width:5.4px;height:5.4px;background:#18a0b0;border-radius:50%"></div><div class="t" style="left:915px;top:314.90px;font-size:6.8px;letter-spacing:-0.275px;color:#ececec">Port 4//10.26.124.181/1/9.RX Stream Count</div><div style="left:887px;top:339.5px;width:174px;height:0.8px;background:#333"></div><div style="left:895.2px;top:330.2px;width:5.4px;height:5.4px;background:#f0a030;border-radius:50%"></div><div class="t" style="left:915px;top:328.20px;font-size:6.8px;letter-spacing:-0.275px;color:#ececec">Port 5//10.26.124.181/1/9.RX Stream Count</div><div style="left:887px;top:352.8px;width:174px;height:0.8px;background:#333"></div><div style="left:895.2px;top:343.5px;width:5.4px;height:5.4px;background:#e5532c;border-radius:50%"></div><div class="t" style="left:915px;top:341.50px;font-size:6.8px;letter-spacing:-0.275px;color:#ececec">Port 6//10.26.124.181/1/9.RX Stream Count</div><div style="left:887px;top:366.1px;width:174px;height:0.8px;background:#333"></div><div style="left:895.2px;top:356.8px;width:5.4px;height:5.4px;background:#3ab0e0;border-radius:50%"></div><div class="t" style="left:915px;top:354.80px;font-size:6.8px;letter-spacing:-0.275px;color:#ececec">Port 7//10.26.124.181/1/9.RX Stream Count</div><div style="left:887px;top:379.40000000000003px;width:174px;height:0.8px;background:#333"></div><div style="left:895.2px;top:370.1px;width:5.4px;height:5.4px;background:#55cc33;border-radius:50%"></div><div class="t" style="left:915px;top:368.10px;font-size:6.8px;letter-spacing:-0.275px;color:#ececec">Port 8//10.26.124.181/1/9.RX Stream Count</div><div style="left:0px;top:425px;width:1064px;height:3.5px;background:#2a2a2a"></div><div style="left:0px;top:428.5px;width:1064px;height:11px;background:#393939"></div><div style="left:0px;top:439.3px;width:1064px;height:1px;background:#555"></div><div style="left:1022px;top:433.8px;width:6px;height:1px;background:#dddddd"></div><svg style="position:absolute;left:1036px;top:429.3px" width="9" height="9"><rect x="1.5" y="1.5" width="6.5" height="6.5" fill="none" stroke="#dddddd" stroke-width="0.9"/><rect x="1.2" y="5" width="3" height="3" fill="#dddddd"/></svg><svg style="position:absolute;left:1053px;top:430.3px" width="7" height="7"><path d="M0.5 0.5L6.5 6.5M6.5 0.5L0.5 6.5" stroke="#dddddd" stroke-width="1"/></svg><div style="left:0px;top:440.3px;width:1064px;height:159px;background:#2a2a2a"></div><div class="t" style="left:4px;top:445.90px;font-size:6.8px;letter-spacing:-0.437px;color:#ececec;font-weight:bold">Port&gt; Basic Traffic Results</div><div style="left:86px;top:444px;width:1px;height:14px;background:#4a4a4a"></div><div style="left:90.5px;top:444.2px;width:81.6px;height:13.2px;background:#2a2a2a;border:1px solid #4a4a4a;border-radius:2px"></div><div class="t" style="left:95.5px;top:446.60px;font-size:6.8px;letter-spacing:-0.044px;color:#ececec">Change Result Views</div><svg style="position:absolute;left:162.1px;top:448.8px" width="6" height="4"><path d="M0 0H6L3 4Z" fill="#ececec"/></svg><div style="left:181.3px;top:444.2px;width:13.5px;height:13.2px;background:#3a3a3a;border:1px solid #4a4a4a;border-radius:2px"></div><div style="left:199px;top:444.2px;width:13.5px;height:13.2px;background:#3a3a3a;border:1px solid #4a4a4a;border-radius:2px"></div><div style="left:221.3px;top:444.2px;width:13.5px;height:13.2px;background:#3a3a3a;border:1px solid #4a4a4a;border-radius:2px"></div><div style="left:239px;top:444.2px;width:13.5px;height:13.2px;background:#3a3a3a;border:1px solid #4a4a4a;border-radius:2px"></div><div style="left:216.8px;top:444px;width:1px;height:14px;background:#4a4a4a"></div><div style="left:257px;top:444px;width:1px;height:14px;background:#4a4a4a"></div><div style="left:184.5px;top:447px;width:8px;height:7.5px;border:1px solid #666;border-top:2px solid #3a70c0;background:#fff"></div><div style="left:188.5px;top:450px;width:4px;height:4px;background:#e8a020;transform:rotate(45deg)"></div><svg style="position:absolute;left:203px;top:447px" width="6" height="8"><path d="M0 0L6 4L0 8Z" fill="#20b070"/></svg><svg style="position:absolute;left:223px;top:446px" width="10" height="10"><path d="M2 6L5 2L8 5L5 8Z" fill="#4a90e2"/><path d="M1 9.5H9" stroke="#4a90e2" stroke-width="0.8"/></svg><div style="left:242px;top:447px;width:6px;height:8px;background:#8a8a8a;border-radius:2px"></div><svg style="position:absolute;left:245px;top:449px" width="6" height="6"><path d="M0 1H3V0L6 3L3 6V5H0Z" fill="#4a90e2"/></svg><div class="t" style="left:261.5px;top:445.90px;font-size:6.8px;letter-spacing:-0.336px;color:#ececec">Show Ports:</div><div style="left:303.8px;top:444.4px;width:81.5px;height:13px;background:#2a2a2a;border:1px solid #4a4a4a;border-radius:2px"></div><div class="t" style="left:308.8px;top:446.70px;font-size:6.8px;letter-spacing:-0.290px;color:#ececec">All Ports</div><svg style="position:absolute;left:375.3px;top:448.9px" width="6" height="4"><path d="M0 0H6L3 4Z" fill="#ececec"/></svg><div class="t" style="left:5px;top:463.60px;font-size:6.8px;letter-spacing:-0.208px;color:#2b88de">Basic Counters</div><div class="t" style="left:65px;top:463.60px;font-size:6.8px;letter-spacing:-0.214px;color:#ececec">Usert Defined</div><div class="t" style="left:117.5px;top:463.60px;font-size:6.8px;letter-spacing:-0.402px;color:#ececec">Errors</div><div class="t" style="left:148px;top:463.60px;font-size:6.8px;letter-spacing:-0.332px;color:#ececec">Undersize/Oversize/Jumbo</div><div class="t" style="left:235.7px;top:463.60px;font-size:6.8px;letter-spacing:-0.343px;color:#ececec">Protocols</div><div style="left:5px;top:474.7px;width:46.5px;height:1.6px;background:#2b88de"></div><div style="left:0px;top:475.3px;width:1064px;height:2.5px;background:#393939"></div><div style="left:5px;top:477.8px;width:1049px;height:20.5px;background:#3a3a3a;border-top:1px solid #3c3c3c"></div><div style="left:5px;top:498.3px;width:1049px;height:13.399999999999977px;background:#262626"></div><div style="left:5px;top:510.9px;width:1049px;height:0.8px;background:#303030"></div><div style="left:5px;top:511.7px;width:1049px;height:12.599999999999966px;background:#1d1d1d"></div><div style="left:5px;top:523.5px;width:1049px;height:0.8px;background:#303030"></div><div style="left:5px;top:524.3px;width:1049px;height:11.700000000000045px;background:#2a2a2a"></div><div style="left:5px;top:535.2px;width:1049px;height:0.8px;background:#303030"></div><div style="left:5px;top:536px;width:1049px;height:13px;background:#262626"></div><div style="left:5px;top:548.2px;width:1049px;height:0.8px;background:#303030"></div><div style="left:5px;top:497.8px;width:1049px;height:0.8px;background:#3c3c3c"></div><div style="left:5px;top:477.8px;width:14.7px;height:71.19999999999999px;background:#3a3a3a"></div><svg style="position:absolute;left:10px;top:490px" width="7" height="6"><path d="M7 0V6H0Z" fill="#888"/></svg><div class="t" style="left:8px;top:538.40px;font-size:7px;letter-spacing:0.000px;color:#ececec">&Sigma;</div><div style="left:5px;top:477.8px;width:0.8px;height:71.19999999999999px;background:#333"></div><div style="left:19.7px;top:477.8px;width:0.8px;height:71.19999999999999px;background:#333"></div><div style="left:105.3px;top:477.8px;width:0.8px;height:71.19999999999999px;background:#333"></div><div style="left:161.3px;top:477.8px;width:0.8px;height:71.19999999999999px;background:#333"></div><div style="left:225.4px;top:477.8px;width:0.8px;height:71.19999999999999px;background:#333"></div><div style="left:274.2px;top:477.8px;width:0.8px;height:71.19999999999999px;background:#333"></div><div style="left:322.5px;top:477.8px;width:0.8px;height:71.19999999999999px;background:#333"></div><div style="left:371.2px;top:477.8px;width:0.8px;height:71.19999999999999px;background:#333"></div><div style="left:418.6px;top:477.8px;width:0.8px;height:71.19999999999999px;background:#333"></div><div style="left:472.4px;top:477.8px;width:0.8px;height:71.19999999999999px;background:#333"></div><div style="left:523.5px;top:477.8px;width:0.8px;height:71.19999999999999px;background:#333"></div><div style="left:578.1px;top:477.8px;width:0.8px;height:71.19999999999999px;background:#333"></div><div style="left:628.5px;top:477.8px;width:0.8px;height:71.19999999999999px;background:#333"></div><div style="left:683px;top:477.8px;width:0.8px;height:71.19999999999999px;background:#333"></div><div style="left:731.9px;top:477.8px;width:0.8px;height:71.19999999999999px;background:#333"></div><div style="left:786px;top:477.8px;width:0.8px;height:71.19999999999999px;background:#333"></div><div style="left:837.5px;top:477.8px;width:0.8px;height:71.19999999999999px;background:#333"></div><div style="left:891.7px;top:477.8px;width:0.8px;height:71.19999999999999px;background:#333"></div><div style="left:946.5px;top:477.8px;width:0.8px;height:71.19999999999999px;background:#333"></div><div style="left:1001px;top:477.8px;width:0.8px;height:71.19999999999999px;background:#333"></div><div class="t" style="left:23.0px;top:483.70px;font-size:6.8px;letter-spacing:-0.312px;color:#ececec">Port Name</div><div class="t" style="left:109.6px;top:483.70px;font-size:6.8px;letter-spacing:-0.270px;color:#ececec">Tx Stream Count</div><div class="t" style="left:165.60000000000002px;top:483.70px;font-size:6.8px;letter-spacing:-0.361px;color:#ececec">Rx Stream Count</div><div class="t" style="left:229.70000000000002px;top:483.70px;font-size:6.8px;letter-spacing:-0.247px;color:#ececec">Tx Total Count</div><div class="t" style="left:278.5px;top:483.70px;font-size:6.8px;letter-spacing:-0.336px;color:#ececec">Rx Total Count</div><div class="t" style="left:325.5px;top:479.80px;font-size:6.8px;letter-spacing:-0.365px;color:#ececec">Tx  Total Count</div><div class="t" style="left:325.5px;top:487.30px;font-size:6.8px;letter-spacing:-0.272px;color:#ececec">(Bytes)</div><div class="t" style="left:374.2px;top:479.80px;font-size:6.8px;letter-spacing:-0.336px;color:#ececec">Rx Total Count</div><div class="t" style="left:374.2px;top:487.30px;font-size:6.8px;letter-spacing:-0.272px;color:#ececec">(Bytes)</div><div class="t" style="left:421.6px;top:479.80px;font-size:6.8px;letter-spacing:-0.365px;color:#ececec">Tx  Total Count</div><div class="t" style="left:421.6px;top:487.30px;font-size:6.8px;letter-spacing:-0.222px;color:#ececec">(bits)</div><div class="t" style="left:475.4px;top:479.80px;font-size:6.8px;letter-spacing:-0.336px;color:#ececec">Rx Total Count</div><div class="t" style="left:475.4px;top:487.30px;font-size:6.8px;letter-spacing:-0.222px;color:#ececec">(bits)</div><div class="t" style="left:526.5px;top:479.80px;font-size:6.8px;letter-spacing:-0.272px;color:#ececec">Tx  Stream</div><div class="t" style="left:526.5px;top:487.30px;font-size:6.8px;letter-spacing:-0.317px;color:#ececec">Rate (fps)</div><div class="t" style="left:581.1px;top:479.80px;font-size:6.8px;letter-spacing:-0.452px;color:#ececec">Rx Stream</div><div class="t" style="left:581.1px;top:487.30px;font-size:6.8px;letter-spacing:-0.317px;color:#ececec">Rate (fps)</div><div class="t" style="left:631.5px;top:479.80px;font-size:6.8px;letter-spacing:-0.466px;color:#ececec">Tx  Byte Rate</div><div class="t" style="left:631.5px;top:487.30px;font-size:6.8px;letter-spacing:-0.436px;color:#ececec">(Bps)</div><div class="t" style="left:686px;top:479.80px;font-size:6.8px;letter-spacing:-0.369px;color:#ececec">Rx Byte Rate</div><div class="t" style="left:686px;top:487.30px;font-size:6.8px;letter-spacing:-0.436px;color:#ececec">(Bps)</div><div class="t" style="left:734.9px;top:479.80px;font-size:6.8px;letter-spacing:-0.420px;color:#ececec">Tx  Bit Rate</div><div class="t" style="left:734.9px;top:487.30px;font-size:6.8px;letter-spacing:-0.285px;color:#ececec">(bps)</div><div class="t" style="left:789px;top:479.80px;font-size:6.8px;letter-spacing:-0.368px;color:#ececec">Rx Bit Rate(</div><div class="t" style="left:789px;top:487.30px;font-size:6.8px;letter-spacing:-0.324px;color:#ececec">bps)</div><div class="t" style="left:840.5px;top:479.80px;font-size:6.8px;letter-spacing:-0.430px;color:#ececec">Tx  L1 Count</div><div class="t" style="left:840.5px;top:487.30px;font-size:6.8px;letter-spacing:-0.222px;color:#ececec">(bits)</div><div class="t" style="left:894.7px;top:479.80px;font-size:6.8px;letter-spacing:-0.399px;color:#ececec">Rx  L1 Count</div><div class="t" style="left:894.7px;top:487.30px;font-size:6.8px;letter-spacing:-0.222px;color:#ececec">(bits)</div><div class="t" style="left:949.5px;top:479.80px;font-size:6.8px;letter-spacing:-0.435px;color:#ececec">Tx  L1 Bit</div><div class="t" style="left:949.5px;top:487.30px;font-size:6.8px;letter-spacing:-0.271px;color:#ececec">Rate (bps)</div><div class="t" style="left:1004px;top:479.80px;font-size:6.8px;letter-spacing:-0.254px;color:#ececec">Rx L1 Bit</div><div class="t" style="left:1004px;top:487.30px;font-size:6.8px;letter-spacing:-0.271px;color:#ececec">Rate (bps)</div><div class="t" style="left:23.2px;top:501.20px;font-size:6.8px;letter-spacing:-0.248px;color:#ececec;font-style:italic">Port 1//10.26.124.181/1/1</div><div class="t" style="left:108.8px;top:501.20px;font-size:6.8px;letter-spacing:-0.077px;color:#ececec;font-style:italic">Port.//7/8</div><div class="t" style="left:164.8px;top:501.20px;font-size:6.8px;letter-spacing:-0.168px;color:#ececec;font-style:italic">N/A</div><div class="t" style="left:228.9px;top:501.20px;font-size:6.8px;letter-spacing:-0.278px;color:#ececec;font-style:italic">0</div><div class="t" style="left:277.7px;top:501.20px;font-size:6.8px;letter-spacing:-0.278px;color:#ececec;font-style:italic">0</div><div class="t" style="left:326.0px;top:501.20px;font-size:6.8px;letter-spacing:-0.271px;color:#ececec;font-style:italic">267,711,542</div><div class="t" style="left:374.7px;top:501.20px;font-size:6.8px;letter-spacing:-0.278px;color:#ececec;font-style:italic">0</div><div class="t" style="left:422.1px;top:501.20px;font-size:6.8px;letter-spacing:-0.271px;color:#ececec;font-style:italic">267,711,542</div><div class="t" style="left:475.9px;top:501.20px;font-size:6.8px;letter-spacing:-0.278px;color:#ececec;font-style:italic">0</div><div class="t" style="left:527.0px;top:501.20px;font-size:6.8px;letter-spacing:-0.271px;color:#ececec;font-style:italic">267,711,542</div><div class="t" style="left:581.6px;top:501.20px;font-size:6.8px;letter-spacing:-0.278px;color:#ececec;font-style:italic">0</div><div class="t" style="left:632.0px;top:501.20px;font-size:6.8px;letter-spacing:-0.271px;color:#ececec;font-style:italic">267,711,542</div><div class="t" style="left:686.5px;top:501.20px;font-size:6.8px;letter-spacing:-0.278px;color:#ececec;font-style:italic">0</div><div class="t" style="left:735.4px;top:501.20px;font-size:6.8px;letter-spacing:-0.271px;color:#ececec;font-style:italic">267,711,542</div><div class="t" style="left:789.5px;top:501.20px;font-size:6.8px;letter-spacing:-0.278px;color:#ececec;font-style:italic">0</div><div class="t" style="left:841.0px;top:501.20px;font-size:6.8px;letter-spacing:-0.271px;color:#ececec;font-style:italic">267,711,542</div><div class="t" style="left:895.2px;top:501.20px;font-size:6.8px;letter-spacing:-0.278px;color:#ececec;font-style:italic">0</div><div class="t" style="left:950.0px;top:501.20px;font-size:6.8px;letter-spacing:-0.271px;color:#ececec;font-style:italic">267,711,542</div><div class="t" style="left:1004.5px;top:501.20px;font-size:6.8px;letter-spacing:-0.278px;color:#ececec;font-style:italic">0</div><div class="t" style="left:23.2px;top:514.20px;font-size:6.8px;letter-spacing:-0.248px;color:#ececec;font-style:italic">Port 2//10.26.124.181/1/2</div><div class="t" style="left:108.8px;top:514.20px;font-size:6.8px;letter-spacing:-0.077px;color:#ececec;font-style:italic">Port.//7/8</div><div class="t" style="left:164.8px;top:514.20px;font-size:6.8px;letter-spacing:-0.168px;color:#ececec;font-style:italic">N/A</div><div class="t" style="left:228.9px;top:514.20px;font-size:6.8px;letter-spacing:-0.278px;color:#ececec;font-style:italic">0</div><div class="t" style="left:277.7px;top:514.20px;font-size:6.8px;letter-spacing:-0.278px;color:#ececec;font-style:italic">0</div><div class="t" style="left:326.0px;top:514.20px;font-size:6.8px;letter-spacing:-0.306px;color:#ececec;font-style:italic">1,484,130</div><div class="t" style="left:374.7px;top:514.20px;font-size:6.8px;letter-spacing:-0.278px;color:#ececec;font-style:italic">0</div><div class="t" style="left:422.1px;top:514.20px;font-size:6.8px;letter-spacing:-0.306px;color:#ececec;font-style:italic">1,484,130</div><div class="t" style="left:475.9px;top:514.20px;font-size:6.8px;letter-spacing:-0.278px;color:#ececec;font-style:italic">0</div><div class="t" style="left:527.0px;top:514.20px;font-size:6.8px;letter-spacing:-0.306px;color:#ececec;font-style:italic">1,484,130</div><div class="t" style="left:581.6px;top:514.20px;font-size:6.8px;letter-spacing:-0.278px;color:#ececec;font-style:italic">0</div><div class="t" style="left:632.0px;top:514.20px;font-size:6.8px;letter-spacing:-0.306px;color:#ececec;font-style:italic">1,484,130</div><div class="t" style="left:686.5px;top:514.20px;font-size:6.8px;letter-spacing:-0.278px;color:#ececec;font-style:italic">0</div><div class="t" style="left:735.4px;top:514.20px;font-size:6.8px;letter-spacing:-0.306px;color:#ececec;font-style:italic">1,484,130</div><div class="t" style="left:789.5px;top:514.20px;font-size:6.8px;letter-spacing:-0.278px;color:#ececec;font-style:italic">0</div><div class="t" style="left:841.0px;top:514.20px;font-size:6.8px;letter-spacing:-0.306px;color:#ececec;font-style:italic">1,484,130</div><div class="t" style="left:895.2px;top:514.20px;font-size:6.8px;letter-spacing:-0.278px;color:#ececec;font-style:italic">0</div><div class="t" style="left:950.0px;top:514.20px;font-size:6.8px;letter-spacing:-0.306px;color:#ececec;font-style:italic">1,484,130</div><div class="t" style="left:1004.5px;top:514.20px;font-size:6.8px;letter-spacing:-0.278px;color:#ececec;font-style:italic">0</div><div class="t" style="left:23.2px;top:526.35px;font-size:6.8px;letter-spacing:-0.248px;color:#ececec;font-style:italic">Port 3//10.26.124.181/1/3</div><div class="t" style="left:108.8px;top:526.35px;font-size:6.8px;letter-spacing:-0.077px;color:#ececec;font-style:italic">Port.//7/8</div><div class="t" style="left:164.8px;top:526.35px;font-size:6.8px;letter-spacing:-0.168px;color:#ececec;font-style:italic">N/A</div><div class="t" style="left:228.9px;top:526.35px;font-size:6.8px;letter-spacing:-0.278px;color:#ececec;font-style:italic">0</div><div class="t" style="left:277.7px;top:526.35px;font-size:6.8px;letter-spacing:-0.278px;color:#ececec;font-style:italic">0</div><div class="t" style="left:326.0px;top:526.35px;font-size:6.8px;letter-spacing:-0.306px;color:#ececec;font-style:italic">1,484,130</div><div class="t" style="left:374.7px;top:526.35px;font-size:6.8px;letter-spacing:-0.278px;color:#ececec;font-style:italic">0</div><div class="t" style="left:422.1px;top:526.35px;font-size:6.8px;letter-spacing:-0.306px;color:#ececec;font-style:italic">1,484,130</div><div class="t" style="left:475.9px;top:526.35px;font-size:6.8px;letter-spacing:-0.278px;color:#ececec;font-style:italic">0</div><div class="t" style="left:527.0px;top:526.35px;font-size:6.8px;letter-spacing:-0.306px;color:#ececec;font-style:italic">1,484,130</div><div class="t" style="left:581.6px;top:526.35px;font-size:6.8px;letter-spacing:-0.278px;color:#ececec;font-style:italic">0</div><div class="t" style="left:632.0px;top:526.35px;font-size:6.8px;letter-spacing:-0.306px;color:#ececec;font-style:italic">1,484,130</div><div class="t" style="left:686.5px;top:526.35px;font-size:6.8px;letter-spacing:-0.278px;color:#ececec;font-style:italic">0</div><div class="t" style="left:735.4px;top:526.35px;font-size:6.8px;letter-spacing:-0.306px;color:#ececec;font-style:italic">1,484,130</div><div class="t" style="left:789.5px;top:526.35px;font-size:6.8px;letter-spacing:-0.278px;color:#ececec;font-style:italic">0</div><div class="t" style="left:841.0px;top:526.35px;font-size:6.8px;letter-spacing:-0.306px;color:#ececec;font-style:italic">1,484,130</div><div class="t" style="left:895.2px;top:526.35px;font-size:6.8px;letter-spacing:-0.278px;color:#ececec;font-style:italic">0</div><div class="t" style="left:950.0px;top:526.35px;font-size:6.8px;letter-spacing:-0.306px;color:#ececec;font-style:italic">1,484,130</div><div class="t" style="left:1004.5px;top:526.35px;font-size:6.8px;letter-spacing:-0.278px;color:#ececec;font-style:italic">0</div><div class="t" style="left:326.0px;top:538.60px;font-size:6.8px;letter-spacing:-0.315px;color:#ececec">3,422,222,222</div><div class="t" style="left:424.1px;top:538.60px;font-size:6.8px;letter-spacing:-0.278px;color:#ececec">0</div><div class="t" style="left:527.0px;top:538.60px;font-size:6.8px;letter-spacing:-0.278px;color:#ececec">128,562,992</div><div class="t" style="left:634.0px;top:538.60px;font-size:6.8px;letter-spacing:-0.343px;color:#ececec">567,588,749.12</div><div class="t" style="left:735.4px;top:538.60px;font-size:6.8px;letter-spacing:-0.342px;color:#ececec">5,345,229,234.92</div><div class="t" style="left:841.0px;top:538.60px;font-size:6.8px;letter-spacing:-0.342px;color:#ececec">5,345,229,234.92</div><div class="t" style="left:895.2px;top:538.60px;font-size:6.8px;letter-spacing:-0.342px;color:#ececec">5,345,229,234.92</div><div class="t" style="left:1004.5px;top:538.60px;font-size:6.8px;letter-spacing:-0.342px;color:#ececec">5,345,229,234.92</div><div style="left:5px;top:549px;width:1049px;height:7px;background:#333"></div><div style="left:19.7px;top:550px;width:331px;height:5px;background:#777"></div><svg style="position:absolute;left:8px;top:550.5px" width="4" height="4"><path d="M4 0V4L0 2Z" fill="#9aa6c0"/></svg><div style="left:1054px;top:478px;width:9px;height:78px;background:#2e2e2e"></div><div style="left:1056px;top:490px;width:5px;height:55px;background:#5a5a5a;border-radius:1px"></div><svg style="position:absolute;left:1055px;top:481px" width="7" height="5"><path d="M0 5L3.5 0L7 5Z" fill="#999"/></svg><svg style="position:absolute;left:1055px;top:549px" width="7" height="5"><path d="M0 0L7 0L3.5 5Z" fill="#999"/></svg><div style="left:0px;top:556.3px;width:1064px;height:1px;background:#464646"></div><div style="left:0px;top:557.3px;width:1064px;height:17px;background:#2a2a2a"></div><div style="left:0px;top:574.3px;width:1064px;height:1px;background:#4a4a4a"></div><div style="left:0px;top:575.3px;width:1064px;height:13px;background:linear-gradient(#333,#3c3c3c)"></div><div style="left:0px;top:588px;width:1064px;height:1px;background:#2e2e2e"></div><div style="left:0px;top:589px;width:1064px;height:10px;background:#414141"></div><div style="left:893px;top:558px;width:47px;height:14px;border:1px solid #555;border-radius:2px;background:#2a2a2a"></div><div class="t" style="left:897px;top:560.40px;font-size:6.8px;letter-spacing:-0.120px;color:#cfcfcf">10/page</div><svg style="position:absolute;left:932px;top:563.5px" width="6" height="4"><path d="M0 0H6L3 4Z" fill="#ddd"/></svg><div class="t" style="left:948px;top:560.40px;font-size:8px;letter-spacing:0.000px;color:#666">&laquo;</div><div class="t" style="left:968px;top:560.40px;font-size:8px;letter-spacing:0.000px;color:#666">&lsaquo;</div><div style="left:980px;top:558px;width:18px;height:14px;border:1px solid #666;border-radius:2px"></div><div class="t" style="left:987px;top:560.40px;font-size:6.8px;letter-spacing:-0.111px;color:#cfcfcf">1</div><div class="t" style="left:1005px;top:560.40px;font-size:6.8px;letter-spacing:-0.139px;color:#cfcfcf">/20</div><div class="t" style="left:1025px;top:560.40px;font-size:8px;letter-spacing:0.000px;color:#cfcfcf">&rsaquo;</div><div class="t" style="left:1041px;top:560.40px;font-size:8px;letter-spacing:0.000px;color:#cfcfcf">&raquo;</div><svg style="position:absolute;left:0;top:0" width="1064" height="599"><defs><linearGradient id="wa" x1="0" y1="0" x2="0" y2="1"><stop offset="0" stop-color="#ee8a22"/><stop offset="0.45" stop-color="#dc2a28"/><stop offset="1" stop-color="#b81c20"/></linearGradient></defs><path fill="url(#wa)" fill-rule="evenodd" d="M850.4 587.8 L875 557 C879 551 884 547.5 891 547 L913 545.9 L900.5 575.8 C912 573 924 569 933.7 566.2 C926 574 915 579.5 899 580.5 L897 587.8 L867.7 587.8 L874.6 572.5 Z M887.4 558.2 L893.8 558.2 L883.9 572 L875.5 572 Z"/><path fill="#c41e24" d="M877 577 L928 576.5 L925 587.8 L873 587.8 Z"/><text x="0" y="0" font-family="Liberation Sans" font-weight="bold" font-size="11.5" fill="#ffffff" textLength="49" lengthAdjust="spacingAndGlyphs" transform="translate(878,587.6) skewX(-18)">CCEXP</text><g transform="translate(939.8,546.7)" stroke="#e3232c" stroke-width="3.0" fill="none" stroke-linecap="butt"><path d="M0 4.5H24"/><path d="M7 0V8M17 0V8"/><path d="M4 9.5L22 20M20.5 9.5L2.5 20"/></g><g transform="translate(967.7,546.7)" stroke="#e3232c" stroke-width="3.0" fill="none" stroke-linecap="butt"><path d="M1.5 3.5H25"/><path d="M13 0V7"/><rect x="5" y="8" width="16" height="5.5" stroke-width="2.6"/><path d="M10 13.5Q9 18 2 20.5"/><path d="M16.5 13.5V18.5H26.5"/></g><g transform="translate(996.8,546.7)" stroke="#e3232c" stroke-width="3.0" fill="none" stroke-linecap="butt"><path d="M12.7 0V2.5"/><path d="M2 6V3H23.5V6"/><path d="M4.5 7H21M3 10H22.5M4.5 13H21" stroke-width="2.4"/><path d="M9 5V15M16 5V15" stroke-width="2"/><path d="M1 15L7 11M24.5 15L18.5 11" stroke-width="2.4"/><rect x="7" y="15" width="11.5" height="3" stroke-width="2.2"/><path d="M8 19.5L3 21M17 19.5L22 21" stroke-width="2.4"/></g><g transform="translate(1025.9,546.7)" stroke="#e3232c" stroke-width="3.0" fill="none" stroke-linecap="butt"><path d="M7 0L9 2.5M18 0L16 2.5"/><path d="M1 4H25"/><path d="M9 4V9M16 4V9" stroke-width="2.4"/><path d="M5 5.5L7 9M21 5.5L19 9" stroke-width="2"/><path d="M0 9.5H25.5" stroke-width="2.6"/><rect x="5" y="12" width="15.5" height="8" stroke-width="2.6"/><path d="M5 16H20.5" stroke-width="2.2"/></g><text x="939" y="577.5" font-family="Liberation Sans" font-size="6.5" fill="#2f2c28" textLength="110" lengthAdjust="spacing">&#9632; &#9632; &#9632; &#9632;&#160;&#160;&#160;&#160;&#160;&#9632; &#9632; &#9632; &#9632;</text><text x="939" y="587.3" font-family="Liberation Sans" font-weight="bold" font-style="italic" font-size="9" fill="#2f2c28" textLength="111" lengthAdjust="spacing">www.hncsw.net</text></svg></div></body></html>
